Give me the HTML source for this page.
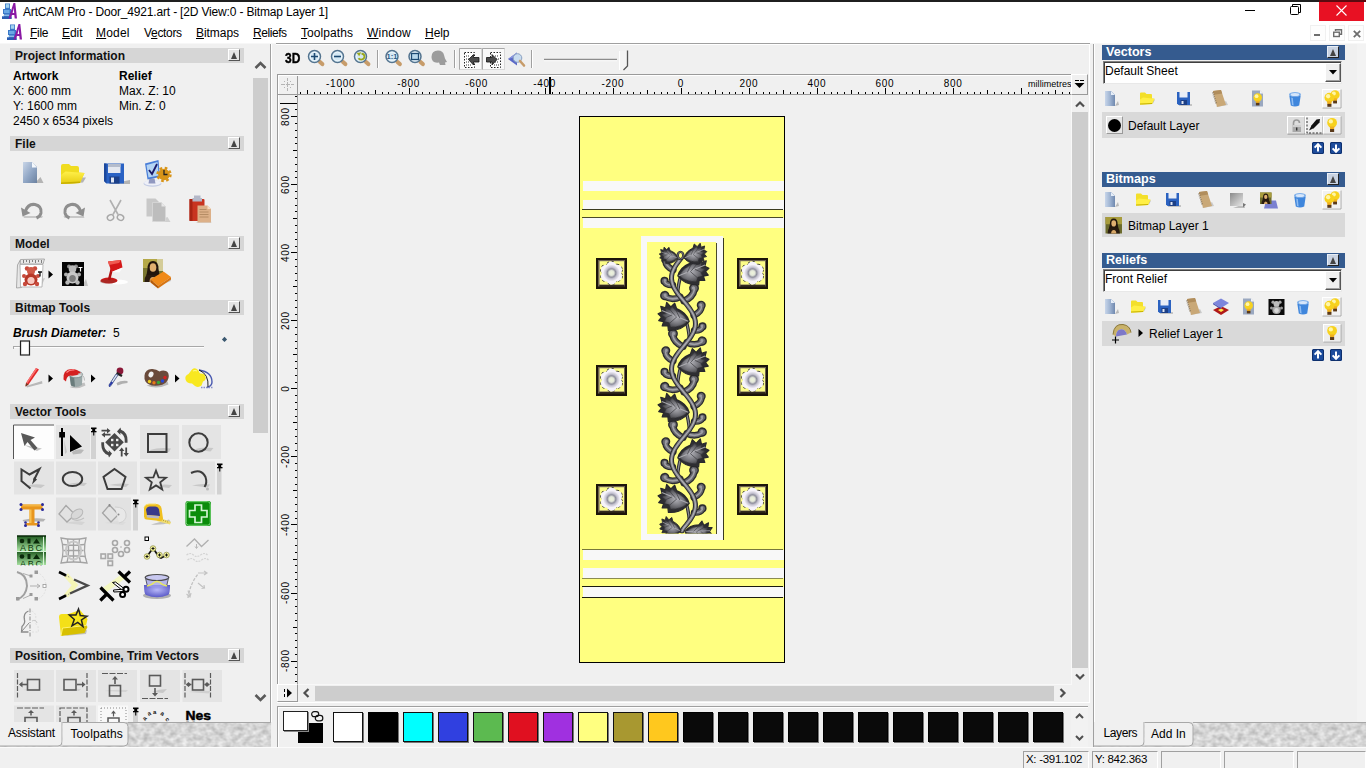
<!DOCTYPE html>
<html lang="en"><head><meta charset="utf-8"><title>ArtCAM Pro - Door_4921.art</title>
<style>
html,body{margin:0;padding:0;}
body{width:1366px;height:768px;overflow:hidden;background:#f0f0f0;position:relative;font-family:"Liberation Sans",sans-serif;font-size:12px;color:#000;}
.a{position:absolute;}
.t{position:absolute;white-space:nowrap;line-height:1;}
svg{position:absolute;overflow:visible;}
#titlebar{left:0;top:0;width:1366px;height:22px;background:#fff;}
#topline{left:0;top:0;width:1366px;height:2px;background:#1f1f1f;}
#menubar{left:0;top:22px;width:1366px;height:21px;background:#fff;}
#menubar .t{font-size:13px;top:5px;}
#menubar u{text-decoration:underline;text-underline-offset:1px;}
.hdr{position:absolute;left:10px;width:234px;height:15px;background:#d6d6d6;}
.hdr b{position:absolute;left:5px;top:2px;font-size:12px;line-height:13px;font-weight:bold;color:#111;white-space:nowrap;}
.cbtn{position:absolute;width:12px;height:12px;background:#e4e4e4;border-right:1px solid #555;border-bottom:1px solid #555;border-left:1px solid #fff;border-top:1px solid #fff;box-sizing:border-box;}
.cbtn i{position:absolute;left:2px;top:2px;width:0;height:0;border-left:3.5px solid transparent;border-right:3.5px solid transparent;border-bottom:7px solid #444;}
.rhdr{position:absolute;left:1102px;width:243px;height:15px;background:#355b8f;}
.rhdr b{position:absolute;left:4px;top:1px;font-size:12.6px;line-height:13px;font-weight:bold;color:#fff;white-space:nowrap;}
.rl{font-size:10px;letter-spacing:0.7px;text-indent:0.7px;}

</style></head>
<body>
<div class="a" id="titlebar"></div><div class="a" id="topline"></div><svg class="a" style="left:2.3px;top:3px" width="15" height="16" viewBox="0 0 15 16">
<path d="M3 .5h5v5.5h1V11H8v2.5h1.5V16H0v-2.5h2V11H1V6h2z" fill="#3a78c8"/>
<path d="M3.8 1.2h3.4v3.6H3.8z" fill="#a4d4f0"/><path d="M2 7h5.5v3H2z" fill="#6aa8e4"/>
<path d="M0 13.5h9.5V16H0z" fill="#2a5cb0"/><path d="M1 12.2h6" stroke="#b8dcf4" stroke-width="1"/>
<path d="M11.5 0h1.8l1.7 15.5h-2.3l-.4-3.5H10l-1.3 3.5H6.5z" fill="#8a1aa4"/>
<path d="M10.6 10h1.6l-.5-5z" fill="#fff"/>
</svg><div class="t" style="left:23px;top:6px;font-size:12px;letter-spacing:-0.17px;color:#000">ArtCAM Pro - Door_4921.art - [2D View:0 - Bitmap Layer 1]</div><div class="a" style="left:1245px;top:10px;width:10px;height:1px;background:#000"></div><svg class="a" style="left:1289px;top:4px" width="12" height="12" viewBox="0 0 12 12"><path d="M3.5 2.5v-2h8v8h-2" fill="none" stroke="#000" stroke-width="1"/><rect x="1.5" y="2.5" width="8" height="8" rx="1" fill="#fff" stroke="#000" stroke-width="1"/></svg><div class="a" style="left:1319px;top:1px;width:45px;height:20px;background:#e81123"></div><div class="a" style="left:1319px;top:0;width:47px;height:2px;background:#5a0a10"></div><svg class="a" style="left:1336px;top:5px" width="11" height="11" viewBox="0 0 11 11"><path d="M0.5 0.5l10 10M10.5 0.5l-10 10" stroke="#fff" stroke-width="1.1" fill="none"/></svg><div class="a" id="menubar"><svg class="a" style="left:7.3px;top:2px" width="15" height="16" viewBox="0 0 15 16">
<path d="M3 .5h5v5.5h1V11H8v2.5h1.5V16H0v-2.5h2V11H1V6h2z" fill="#3a78c8"/>
<path d="M3.8 1.2h3.4v3.6H3.8z" fill="#a4d4f0"/><path d="M2 7h5.5v3H2z" fill="#6aa8e4"/>
<path d="M0 13.5h9.5V16H0z" fill="#2a5cb0"/><path d="M1 12.2h6" stroke="#b8dcf4" stroke-width="1"/>
<path d="M11.5 0h1.8l1.7 15.5h-2.3l-.4-3.5H10l-1.3 3.5H6.5z" fill="#8a1aa4"/>
<path d="M10.6 10h1.6l-.5-5z" fill="#fff"/>
</svg><div class="t" style="left:30px;top:5px;font-size:12px;letter-spacing:-0.29px"><u>F</u>ile</div><div class="t" style="left:62px;top:5px;font-size:12px;letter-spacing:-0.05px"><u>E</u>dit</div><div class="t" style="left:96px;top:5px;font-size:12px;letter-spacing:0.18px"><u>M</u>odel</div><div class="t" style="left:144px;top:5px;font-size:12px;letter-spacing:-0.32px">V<u>e</u>ctors</div><div class="t" style="left:196px;top:5px;font-size:12px;letter-spacing:-0.05px"><u>B</u>itmaps</div><div class="t" style="left:253px;top:5px;font-size:12px;letter-spacing:-0.44px"><u>R</u>eliefs</div><div class="t" style="left:301px;top:5px;font-size:12px;letter-spacing:0.07px"><u>T</u>oolpaths</div><div class="t" style="left:367px;top:5px;font-size:12px;letter-spacing:0.22px"><u>W</u>indow</div><div class="t" style="left:425px;top:5px;font-size:12px;letter-spacing:-0.05px"><u>H</u>elp</div><div class="a" style="left:1310px;top:3px;width:16px;height:16px;border:1px solid #f0f0f0;box-sizing:border-box;background:#fdfdfd"></div><div class="a" style="left:1329px;top:3px;width:16px;height:16px;border:1px solid #f0f0f0;box-sizing:border-box;background:#fdfdfd"></div><div class="a" style="left:1348px;top:3px;width:16px;height:16px;border:1px solid #f0f0f0;box-sizing:border-box;background:#fdfdfd"></div><div class="a" style="left:1314px;top:12px;width:6px;height:2px;background:#6d6d6d"></div><svg class="a" style="left:1333px;top:7px" width="9" height="9" viewBox="0 0 9 9"><path d="M2.5 2V.8h6v4.5H7" fill="none" stroke="#6d6d6d" stroke-width="1.4"/><rect x=".7" y="3.2" width="5.6" height="4.3" fill="#fff" stroke="#6d6d6d" stroke-width="1.4"/></svg><svg class="a" style="left:1353px;top:8px" width="8" height="8" viewBox="0 0 8 8"><path d="M.8 .8l6.4 6.4M7.2 .8L.8 7.2" stroke="#6d6d6d" stroke-width="1.8" fill="none"/></svg></div><div class="a" style="left:0;top:43px;width:1366px;height:1px;background:#f7f7f7"></div><div class="a" id="leftpanel" style="left:0;top:44px;width:270px;height:678px;background:#f0f0f0;overflow:hidden"><div class="hdr" style="top:4px"><b>Project Information</b><span class="cbtn" style="left:218px;top:1px"><i></i></span></div><div class="t" style="left:13px;top:25.5px;font-weight:bold;">Artwork</div><div class="t" style="left:119px;top:25.5px;font-weight:bold;">Relief</div><div class="t" style="left:13px;top:40.5px;">X: 600 mm</div><div class="t" style="left:119px;top:40.5px;">Max. Z: 10</div><div class="t" style="left:13px;top:55.5px;">Y: 1600 mm</div><div class="t" style="left:119px;top:55.5px;">Min. Z: 0</div><div class="t" style="left:13px;top:70.5px;">2450 x 6534 pixels</div><div class="hdr" style="top:92px"><b>File</b><span class="cbtn" style="left:218px;top:1px"><i></i></span></div><div class="hdr" style="top:192px"><b>Model</b><span class="cbtn" style="left:218px;top:1px"><i></i></span></div><div class="hdr" style="top:256px"><b>Bitmap Tools</b><span class="cbtn" style="left:218px;top:1px"><i></i></span></div><div class="t" style="left:13px;top:283px;"><b><i>Brush Diameter:</i></b>&nbsp; 5</div><div class="hdr" style="top:360px"><b>Vector Tools</b><span class="cbtn" style="left:218px;top:1px"><i></i></span></div><div class="hdr" style="top:604px"><b>Position, Combine, Trim Vectors</b><span class="cbtn" style="left:218px;top:1px"><i></i></span></div><svg class="a" style="left:0;top:-44px" width="270" height="768" viewBox="0 0 270 768"><defs><linearGradient id="gdoc" x1="0" y1="0" x2="1" y2="1"><stop offset="0" stop-color="#c9d6e8"/><stop offset=".55" stop-color="#8fa5c4"/><stop offset="1" stop-color="#6b819f"/></linearGradient><linearGradient id="gfold" x1="0" y1="0" x2="0" y2="1"><stop offset="0" stop-color="#fff04a"/><stop offset="1" stop-color="#e6cc10"/></linearGradient><linearGradient id="gabc" x1="0" y1="0" x2="0" y2="1"><stop offset="0" stop-color="#1f5a1f"/><stop offset=".5" stop-color="#a6e0a0"/><stop offset=".52" stop-color="#1f5a1f"/><stop offset="1" stop-color="#a6e0a0"/></linearGradient><radialGradient id="gbowl" cx=".5" cy=".4" r=".6"><stop offset="0" stop-color="#b8b8f8"/><stop offset="1" stop-color="#5a5ac8"/></radialGradient><filter id="sh" x="-20%" y="-20%" width="140%" height="140%"><feGaussianBlur stdDeviation="0.7"/></filter></defs><g transform="translate(23 162)"><path d="M12 21h8.5l-3-6z" fill="#b4b4b4" filter="url(#sh)"/><path d="M0 0h9l5 5v16H0z" fill="url(#gdoc)"/><path d="M9 0l5 5.5H9z" fill="#f4f8fc"/></g><g transform="translate(60 163)"><path d="M4 21l19-1.5 3-5-6 0z" fill="#b4b4b4" filter="url(#sh)"/><path d="M1 3q0-2 2-2h6l2 2h6q2 0 2 2v4.5l5.5.5L20 20 1 21z" fill="#f0dc20"/><path d="M1 12l4.5-3.5L24.5 10 20 20 1 21z" fill="url(#gfold)"/><path d="M1 19.5L20 18.5 20 20 1 21z" fill="#c8b000"/></g><g transform="translate(104 163.5)"><path d="M5 20.5h21v-4z" fill="#b4b4b4" filter="url(#sh)"/><path d="M0 0h20v20H2.5L0 17.5z" fill="#2a62c4"/><path d="M0 0h2.5v20H2.5L0 17.5z" fill="#1c489c"/><rect x="4" y="0.5" width="12.5" height="9" fill="#e4e8f0"/><rect x="4" y="0.5" width="12.5" height="3" fill="#b4bccc"/><rect x="5.5" y="13" width="10" height="7" fill="#1b3f88"/><rect x="7" y="14" width="3" height="5" fill="#dfe6f3"/></g><g transform="translate(143.5 160)"><ellipse cx="9" cy="23.5" rx="9" ry="3.2" fill="#c4cce4"/><ellipse cx="9" cy="22.8" rx="8.5" ry="2.6" fill="#eef0f8"/><path d="M6 18l5 .5 1 5H5z" fill="#9098c0"/><path d="M1.5 3.5L15 0l1.5 17L4 19.5z" fill="#4a7ed8"/><path d="M3 5L14 2l1.2 13.5L5 17.5z" fill="#b4d4f4"/><path d="M5.5 10l3 4 5-10" fill="none" stroke="#1a1a6a" stroke-width="1.8"/><circle cx="20.5" cy="14.5" r="5.8" fill="#d89418"/><circle cx="20.5" cy="14.5" r="6.5" fill="none" stroke="#d89418" stroke-width="2.4" stroke-dasharray="2.6 2.5"/><path d="M20.5 10v4.5h3.5" stroke="#222" stroke-width="1.3" fill="none"/></g><g transform="translate(21 203)"><path d="M2 13h20l-1 2H3z" fill="#c8c8c8"/><path d="M4.5 8Q7 0.5 14 1.5q7 1.5 6 8.5-.8 3.5-4.5 5" fill="none" stroke="#8e8e8e" stroke-width="3"/><path d="M0 4.5l1.5 9 8-3.5z" fill="#8e8e8e"/></g><g transform="translate(62.5 203)"><path d="M1 13h20l1 2H2z" fill="#c8c8c8"/><path d="M18 8Q15.5 0.5 8.5 1.5 1.5 3 2.5 10q.8 3.5 4.5 5" fill="none" stroke="#8e8e8e" stroke-width="3"/><path d="M22.5 4.5l-1.5 9-8-3.5z" fill="#8e8e8e"/></g><g transform="translate(106 199.5)"><path d="M4 0.5L12 15M15 0.5L7 15" stroke="#b0b0b0" stroke-width="1.6" fill="none"/><ellipse cx="4.5" cy="18" rx="3.3" ry="2.8" fill="none" stroke="#a8a8a8" stroke-width="1.4" transform="rotate(-30 4.5 18)"/><ellipse cx="14.5" cy="18" rx="3.3" ry="2.8" fill="none" stroke="#a8a8a8" stroke-width="1.4" transform="rotate(30 14.5 18)"/></g><g transform="translate(146.5 198.5)"><path d="M8 23.5h16l-3-5z" fill="#d0d0d0" filter="url(#sh)"/><path d="M0 0h9l3 3v15H0z" fill="#c8c8c8"/><path d="M6 4h9l4 4v15H6z" fill="#bdbdbd" stroke="#d8d8d8" stroke-width=".8"/><path d="M15 4l4 4h-4z" fill="#e8e8e8"/></g><g transform="translate(189.5 195.5)"><path d="M6 27h16l-2-4z" fill="#c0c0c0" filter="url(#sh)"/><rect x="0" y="3.5" width="15" height="22" rx="1" fill="#c83420"/><rect x="0" y="3.5" width="3" height="22" fill="#a82414"/><path d="M4.5 0h6.5v2.5h1.5v3.5h-9.5V2.5h1.5z" fill="#b4b8c8"/><path d="M8 10h10l3.5 3.5V27H8z" fill="#dcb088"/><path d="M18 10l3.5 3.5H18z" fill="#f4dcc0"/><path d="M10 14h7M10 16.5h9M10 19h9M10 21.5h9" stroke="#b08860" stroke-width=".9"/></g><g transform="translate(15.5 259)"><path d="M26 27l3.5-8-4 1z" fill="#c8c8c8"/><path d="M5 0.5L29 0l-1.5 5H4z" fill="#e8e8e8" stroke="#999" stroke-width=".8"/><path d="M2 6L4.5 1.5 6 28.5l-5 .5z" fill="#e8e8e8" stroke="#999" stroke-width=".8"/><path d="M4.5 5.5h23L26.5 28H5z" fill="#fff" stroke="#aaa" stroke-width=".8"/><path d="M8 1v3M11 1v2M14 1v3M17 1v2M20 1v3M23 1v2M26 1v3" stroke="#666" stroke-width=".8"/><circle cx="11.5" cy="9.5" r="2.2" fill="#c84a3c"/><circle cx="19.5" cy="9.5" r="2.2" fill="#c84a3c"/><circle cx="15.5" cy="12" r="4" fill="#d05a48"/><ellipse cx="15.5" cy="20.5" rx="6.5" ry="6" fill="#b83828"/><ellipse cx="15.5" cy="21.5" rx="3.6" ry="3.6" fill="#f8c8c0"/><circle cx="9.5" cy="25" r="2.2" fill="#c84a3c"/><circle cx="21.5" cy="25" r="2.2" fill="#c84a3c"/><circle cx="8.5" cy="17" r="2" fill="#c84a3c"/><circle cx="22.5" cy="17" r="2" fill="#c84a3c"/><path d="M22.5 13h4M24.5 13v4.5" stroke="#111" stroke-width="1.3"/></g><path d="M48.5 270.5v8l4.5-4z" fill="#000"/><g transform="translate(62 262)"><path d="M20 24h6l-2-7z" fill="#c4c4c4"/><rect width="22" height="24" fill="#050505"/><circle cx="7" cy="4.5" r="2" fill="#909090"/><circle cx="14" cy="4.5" r="2" fill="#909090"/><circle cx="10.5" cy="7" r="3.8" fill="#b8b8b8"/><ellipse cx="10.5" cy="15.5" rx="6" ry="6" fill="#c8c8c8"/><ellipse cx="10.5" cy="16.5" rx="3.3" ry="3.5" fill="#7c7c7c"/><circle cx="4" cy="12.5" r="2" fill="#b0b0b0"/><circle cx="17" cy="12.5" r="2" fill="#b0b0b0"/><circle cx="5.5" cy="20.5" r="2.2" fill="#b8b8b8"/><circle cx="15.5" cy="20.5" r="2.2" fill="#b8b8b8"/><path d="M16.5 5.5h4M18.5 5.5v4" stroke="#fff" stroke-width="1.2"/></g><g transform="translate(100 260)"><ellipse cx="17" cy="22" rx="11" ry="2.5" fill="#fff" opacity=".9"/><ellipse cx="9" cy="20.5" rx="8.5" ry="3" fill="#c81818"/><ellipse cx="8" cy="21.5" rx="8" ry="2" fill="#8a3a30" opacity=".45"/><path d="M9 20L12 8" stroke="#b01010" stroke-width="2.6"/><path d="M8 1.5l13-1.5 1.5 7.5-11 4.5z" fill="#d41818"/><path d="M8 1.5L21 0l-2 3-10 2z" fill="#f05a50"/><path d="M22.5 7.5l-3 5-8-0.5z" fill="#fff" opacity=".8"/></g><g transform="translate(143 259)"><path d="M10 29l18-7 0-3z" fill="#c8c8c8" filter="url(#sh)"/><rect x="0" y="0" width="20" height="23" fill="#7a7630"/><rect x="0" y="0" width="20" height="9" fill="#b4a848"/><rect x="14" y="0" width="6" height="12" fill="#d4cc98"/><path d="M1.5 23q0-10 8.5-10t8.5 10z" fill="#2a1c10"/><path d="M4.5 10q0-8 5.5-8t5.5 8l1 6H3.5z" fill="#22160c"/><ellipse cx="10" cy="8.5" rx="3.3" ry="4.3" fill="#e0b070"/><path d="M6.5 23q0-5 3.5-5t3.5 5z" fill="#d8a868"/><path d="M7.5 20.5L20.5 12.5l7.5 5.5-13 9z" fill="#f08a18"/><path d="M7.5 20.5l7.5 6.5v2.5l-7.5-6z" fill="#b45a08"/><path d="M15 27l13-9v2.5l-13 9z" fill="#d87410"/></g><path d="M13 346.5H204" stroke="#a8a8a8" stroke-width="1"/><path d="M13 347.5H204" stroke="#fdfdfd" stroke-width="1"/><path d="M13.5 346v3" stroke="#a8a8a8"/><rect x="20.5" y="341" width="9" height="14" fill="#f4f4f4" stroke="#222" stroke-width="1.2"/><rect x="22" y="342.5" width="6" height="11" fill="#fff"/><path d="M224.5 336.8l2.6 2.6-2.6 2.6-2.6-2.6z" fill="#3a5870"/><g transform="translate(24 368)"><path d="M2 18l16-5 .5 2.5L3 19.5z" fill="#b8b8b8" filter="url(#sh)"/><path d="M12 0l3 1.5L4.5 16.5 1.5 18.5 2 15z" fill="#e02828"/><path d="M12 0l1.5.8L3 16 2 15z" fill="#f87070"/><path d="M1.5 18.5L2 15l2.5 1.5z" fill="#6a3a20"/></g><path d="M48.5 374.5v8l4.5-4z" fill="#000"/><g transform="translate(63.5 367.5)"><path d="M6 19.5q8 3 16-1.5l-1-3z" fill="#c0c0c0" filter="url(#sh)"/><path d="M6 8l1.5 10q5.5 3 11-0.5L19 6.5z" fill="#9aa8a8"/><path d="M6 8l1.5 10q2 1 4 1.2L10.5 8z" fill="#6a7c7c"/><ellipse cx="12.5" cy="7" rx="6.6" ry="3.3" fill="#d8e0e0" stroke="#788" stroke-width=".8"/><path d="M0 12Q-1 2 8 1.5q6 0 9.5 4-5 3.5-10.5 2.5Q3 8.5 2.5 14z" fill="#d42020"/><path d="M3 5q3-3 8-2.5" stroke="#f88" stroke-width="1.2" fill="none"/><path d="M15 6q6 1 6 7" fill="none" stroke="#bbb" stroke-width="1"/></g><path d="M91 374.5v8l4.5-4z" fill="#000"/><g transform="translate(107.5 367.5)"><path d="M9 15.5q5-3 11-2l0 2q-5 0-10 2.5z" fill="#b0b0b0" filter="url(#sh)"/><circle cx="12.5" cy="3.5" r="3.4" fill="#8a1838"/><path d="M9 5.5l5.5 3" stroke="#222" stroke-width="2.4"/><path d="M10.5 7.5L3.5 18 2 19.5 1.5 17.5 8.5 6.5z" fill="#dce4f4" stroke="#4a5a8a" stroke-width=".9"/><path d="M5.5 15L2 19.5 1.5 17.5 4 14z" fill="#2838a8"/></g><g transform="translate(143.5 368.5)"><path d="M3 17q10 4.5 22-1l-1-3z" fill="#b8b8b8" filter="url(#sh)"/><path d="M1 7Q2 0 9 .5q4 .3 7 2.5 3-1.5 6.5-.5Q26 4 25 9.5 23.5 16 15 17 5 18 2 13 .5 10.5 1 7z" fill="#6a4a3a"/><ellipse cx="7.5" cy="6" rx="2.4" ry="3" fill="#f0f0f0" transform="rotate(25 7.5 6)"/><circle cx="6" cy="13" r="1.7" fill="#f0d020"/><circle cx="10.5" cy="14.2" r="1.7" fill="#e87818"/><circle cx="15" cy="14" r="1.7" fill="#38a838"/><circle cx="19" cy="12.5" r="1.7" fill="#2848d8"/><circle cx="21.5" cy="9" r="1.7" fill="#d82020"/></g><path d="M175 374.5v8l4.5-4z" fill="#000"/><g transform="translate(185 368)"><path d="M14 2Q27 4 27 14q0 4-5 5.5" fill="none" stroke="#4a5ab0" stroke-width="1.4"/><path d="M14 2q10 4 9 17" fill="none" stroke="#222" stroke-width="1"/><path d="M16 19.5h12" stroke="#8a90c8" stroke-width="1.5" stroke-dasharray="1.5 1"/><path d="M7 1.5q3-2.5 6 .5l2 3.5q4.5-.5 5.5 3t-2.5 5l-1.5 4q-3 2.5-6.5.5l-3-2.5Q1.5 15.5.5 11.5t3-5.5z" fill="#f8e820"/><path d="M8 3q2-1 4 0" stroke="#fff890" stroke-width="1.2" fill="none"/></g><rect x="13" y="424.5" width="41" height="34.5" fill="#fdfdfd"/><path d="M13.5 459V425H54" fill="none" stroke="#555" stroke-width="1"/><rect x="56" y="425" width="34" height="34" fill="#e4e4e4"/><rect x="91" y="432" width="5" height="27" fill="#d2d2d2"/><g transform="translate(91 425.5)" fill="#000"><rect x="0" y="2" width="5.5" height="1.6"/><rect x="1.2" y="3.5" width="3" height="2.2"/><rect x="0" y="5.5" width="5.5" height="1.3"/><rect x="2.2" y="6.5" width="1.1" height="3.5"/></g><rect x="140" y="425" width="39" height="34" fill="#e4e4e4"/><rect x="182" y="425" width="39" height="34" fill="#e4e4e4"/><rect x="14" y="461.5" width="40" height="33" fill="#e4e4e4"/><rect x="56" y="461.5" width="40" height="33" fill="#e4e4e4"/><rect x="98" y="461.5" width="39" height="33" fill="#e4e4e4"/><rect x="140" y="461.5" width="39" height="33" fill="#e4e4e4"/><rect x="182" y="461.5" width="33" height="33" fill="#e4e4e4"/><rect x="217" y="468" width="4.5" height="26.5" fill="#d2d2d2"/><g transform="translate(217 461.5)" fill="#000"><rect x="0" y="2" width="5.5" height="1.6"/><rect x="1.2" y="3.5" width="3" height="2.2"/><rect x="0" y="5.5" width="5.5" height="1.3"/><rect x="2.2" y="6.5" width="1.1" height="3.5"/></g><rect x="56" y="497.5" width="40" height="33" fill="#e2e2e2"/><rect x="98" y="497.5" width="33" height="33" fill="#e2e2e2"/><rect x="133" y="504" width="5" height="26.5" fill="#d2d2d2"/><g transform="translate(133 497.5)" fill="#000"><rect x="0" y="2" width="5.5" height="1.6"/><rect x="1.2" y="3.5" width="3" height="2.2"/><rect x="0" y="5.5" width="5.5" height="1.3"/><rect x="2.2" y="6.5" width="1.1" height="3.5"/></g><g transform="translate(20 431)"><path d="M4 14l18 3.5-5 2.5z" fill="#c4c4c4" filter="url(#sh)"/><path d="M1 2l14 4.5-4.5 2.5 7 8-3 2.5-7-8.5-3 4z" fill="#585858"/></g><path d="M72 452q5-4 12-2l-3 3.5-8 1z" fill="#b8b8b8" filter="url(#sh)"/><path d="M64 440l3 12-2 2z" fill="#c8c8c8" filter="url(#sh)"/><path d="M62 428v28" stroke="#000" stroke-width="2"/><rect x="59.2" y="432" width="5.8" height="5.5" fill="#000"/><path d="M70 435v17l12-5.5z" fill="#000"/><g fill="#484848" stroke="none"><path d="M114.5 433l9.3 9.3-9.3 9.3-9.3-9.3z"/><g fill="#ececec"><rect x="111" y="438.8" width="2.4" height="2.4"/><rect x="116" y="438.8" width="2.4" height="2.4"/><rect x="111" y="443.8" width="2.4" height="2.4"/><rect x="116" y="443.8" width="2.4" height="2.4"/></g><path d="M117 431.5l3.5-4 .5 2.3q6.5 2.5 6.5 10.5v2.5h-2.8v-2.5q0-5.5-4.5-7.5l.3 2.2z"/><path d="M112 453.5l-3 4-.7-2.3q-7-2.5-7-10.5v-2.5h2.8v2.5q0 5.5 5 7.5l-.5-2.2z"/><path d="M101.5 429.8h5.5v-1.8l3.5 2.7-3.5 2.7v-1.8h-5.5zM110.5 433.8h-5.5v-1.8l-3.5 2.7 3.5 2.7v-1.8h5.5z"/><path d="M120.8 456.5v-5.5h-1.8l2.7-3.5 2.7 3.5h-1.8v5.5zM125.3 447.5v5.5h-1.8l2.7 3.5 2.7-3.5h-1.8v-5.5z"/></g><g transform="translate(147 433)"><path d="M3 17q9-3 21-1.5l-2 3.5H4z" fill="#c8c8c8" filter="url(#sh)"/><rect x="1" y="1" width="18.5" height="18" fill="none" stroke="#3c3c3c" stroke-width="2"/></g><g transform="translate(188.5 432.5)"><path d="M5 17q9-3 20-1.5l-3 3.5z" fill="#c8c8c8" filter="url(#sh)"/><circle cx="10" cy="10" r="9.2" fill="none" stroke="#3c3c3c" stroke-width="2"/></g><g transform="translate(20 467)"><path d="M5 19q10-3 20-1l-4 3z" fill="#c8c8c8" filter="url(#sh)"/><path d="M10.5 21.5L1.5 14V2.5l8 5L19.5 2 14 13" fill="none" stroke="#3c3c3c" stroke-width="2"/><path d="M12 17.5l2-7.5 3 2.5z" fill="#3c3c3c"/></g><g transform="translate(62 471)"><path d="M6 13q9-2.5 19-1l-3 3z" fill="#c8c8c8" filter="url(#sh)"/><ellipse cx="10.5" cy="8" rx="9.7" ry="7" fill="none" stroke="#3c3c3c" stroke-width="2"/></g><g transform="translate(102 468)"><path d="M7 17q9-2.5 20-1l-3 3z" fill="#c8c8c8" filter="url(#sh)"/><path d="M12.5 1L23.5 9 19.5 21H5.5L1.5 9z" fill="none" stroke="#3c3c3c" stroke-width="2"/></g><g transform="translate(145 469)"><path d="M8 17q9-2.5 19-1l-3 3z" fill="#c8c8c8" filter="url(#sh)"/><path d="M11 1.5l2.6 6.8 7.4.4-5.8 4.6 2 7.2L11 16.4 4.8 20.5l2-7.2L1 8.7l7.4-.4z" fill="none" stroke="#3c3c3c" stroke-width="1.8"/></g><g transform="translate(188 470)"><path d="M4 15.5q9-2.5 18-1l-2 3z" fill="#c8c8c8" filter="url(#sh)"/><path d="M3 3Q13-2 17.5 7q2 6-1 10" fill="none" stroke="#3c3c3c" stroke-width="2"/><circle cx="19.5" cy="19" r="1.5" fill="#bbb"/></g><g transform="translate(19.5 503)"><path d="M3 17q12-3 23-1l-2 2.5H4z" fill="#b4b4b4" filter="url(#sh)"/><path d="M1.5 1.5h21.5v5h-8v13.5h4v2.5H6v-2.5h4V6.5h-8.5z" fill="#e8961e"/><path d="M10 6.5h2v13.5h-2z" fill="#f8c050"/><path d="M1.5 1.5h21.5v2H1.5z" fill="#f4b440"/><g fill="#2a2a9a"><circle cx="1.5" cy="1.5" r="1.5"/><circle cx="23" cy="1.5" r="1.5"/><circle cx="1.5" cy="6.5" r="1.5"/><circle cx="23" cy="6.5" r="1.5"/><circle cx="6" cy="22.5" r="1.5"/><circle cx="19" cy="22.5" r="1.5"/><circle cx="6" cy="19.5" r="1.3"/><circle cx="19" cy="19.5" r="1.3"/></g></g><g transform="translate(58 503)"><path d="M7 20q10-3 20-1l-3 3z" fill="#d4d4d4" filter="url(#sh)"/><path d="M8 2.5l9 9-8 7.5-8-8z" fill="none" stroke="#a8a8a8" stroke-width="1.3"/><ellipse cx="19" cy="11" rx="6.5" ry="4" fill="#d8d8d8" stroke="#b8b8b8" stroke-width="1" transform="rotate(-35 19 11)"/><path d="M14 16q6 3 12-1" stroke="#c0c0c0" stroke-width="1.2" fill="none"/></g><g transform="translate(101 503)"><path d="M3 20q10-3 22-1l-3 3z" fill="#dcdcdc" filter="url(#sh)"/><path d="M8.5 2l9 9.5-7.5 7.5-8.5-9z" fill="none" stroke="#a4a4a4" stroke-width="1.3"/><path d="M14 4q10 0 11 7t-7 9" fill="#e8e8e8" stroke="#d0d0d0" stroke-width="1"/><circle cx="8.5" cy="2" r="1" fill="#888"/><circle cx="17.5" cy="11.5" r="1" fill="#888"/></g><g transform="translate(143 503.5)"><path d="M8 21q10 1 20-2l-2-3z" fill="#c0c0c0" filter="url(#sh)"/><path d="M16 14l12 4.5-1 2.5-13-3.5z" fill="#f0dc70"/><path d="M18 16l8 3" stroke="#a08820" stroke-width=".8" stroke-dasharray="1 1.2"/><path d="M1 4Q2 .5 6 .5h7q4 0 5.5 4L20 15q0 2-3 2.5L3.5 16Q1 15.5 1 13z" fill="#f0c020"/><path d="M3 6q1-3 4-3h5q3 0 4 3l1 6.5-13-1z" fill="#3a3a8a"/><path d="M3.5 11.5l12.5 1-.3 2.5L4 14z" fill="#b8b8c8"/><path d="M1 4Q2 .5 6 .5h7" stroke="#f8e070" stroke-width="1" fill="none"/></g><g transform="translate(185.5 501)"><rect x="0" y="0" width="25.5" height="25" rx="2.5" fill="#0a8c0a"/><rect x=".7" y=".7" width="24" height="23.5" rx="2.5" fill="none" stroke="#7cd87c" stroke-width="1"/><path d="M9.5 4h6.5v5.5h5.5V16H16v5.5H9.5V16H4V9.5h5.5z" fill="#0a8c0a" stroke="#d4f4d4" stroke-width="1.7"/></g><g transform="translate(17 536)"><rect width="29" height="29" fill="url(#gabc)"/><g fill="#0a2a0a"><circle cx="5" cy="5" r="2.3"/><rect x="10.5" y="2.5" width="3" height="5"/><path d="M16 7.5l3.5-5 3.5 5z"/><circle cx="5" cy="20.5" r="2.3"/><rect x="10.5" y="18" width="3" height="5"/><path d="M16 23l3.5-5 3.5 5z"/></g><path d="M26.5 0v29M0 15.5h29" stroke="#d8f4d8" stroke-width="1"/><path d="M0 0h29" stroke="#0a2a0a" stroke-width="1.5"/><text x="3" y="14.8" font-family="Liberation Sans,sans-serif" font-size="9" fill="#103810" textLength="22">ABC</text><text x="3" y="30.5" font-family="Liberation Sans,sans-serif" font-size="9" fill="#103810" textLength="22" clip-path="inset(0 0 3px 0)">ABC</text></g><g transform="translate(60 536.5)"><g fill="none" stroke="#a4a4a4" stroke-width="1.3"><path d="M1 1.5Q13.5 4 26 1.5Q22.5 14 27 26.5Q13.5 24.5 1 26.5Q5 14 1 1.5z"/><path d="M7.5 2.5Q10 14 7 26M13.5 3v22.5M19.5 2.5Q17.5 14 20.5 26M3 8q10.5 1.5 21.5 0M3.5 14h20M3 20q10.5-1.5 22.5 0"/></g><ellipse cx="13.5" cy="14" rx="7.5" ry="9" fill="none" stroke="#c8c8c8" stroke-width="2.2"/></g><g transform="translate(100 539)"><g fill="none" stroke="#a8a8a8" stroke-width="1.6"><rect x="1" y="15" width="4.5" height="4.5"/><rect x="8" y="15" width="4.5" height="4.5"/><rect x="8" y="22" width="4.5" height="4.5"/><circle cx="15" cy="4" r="2.5"/><circle cx="27" cy="4" r="2.5"/><circle cx="15" cy="11" r="2.5"/><circle cx="27" cy="11" r="2.5"/><circle cx="21" cy="15" r="2.5"/></g><circle cx="21" cy="8" r=".8" fill="#a8a8a8"/></g><g transform="translate(143.5 536)"><rect x="1.5" y="1" width="3.5" height="3.5" fill="#fff" stroke="#000" stroke-width="1"/><path d="M3.5 20.5L9.5 12l6 9 2 1 5-2.5" fill="none" stroke="#111" stroke-width="1.8"/><g fill="#f4f4a0" stroke="#8a8a40" stroke-width=".7"><circle cx="3.5" cy="20.5" r="2.8"/><circle cx="9.5" cy="12.5" r="2.8"/><circle cx="16" cy="19" r="2.8"/><circle cx="23" cy="19" r="2.8"/></g><g stroke="#111" stroke-width="1"><path d="M2 20.5h3M3.5 19v3M8 12.5h3M9.5 11v3M14.5 19h3M16 17.5v3M21.5 19h3M23 17.5v3"/></g></g><g transform="translate(185.5 538)"><path d="M1 8.5L9 1l7 7.5L23 2" fill="none" stroke="#b0b0b0" stroke-width="1.3"/><path d="M11 6v4M9.5 8.5L11 10.5 12.5 8.5" fill="none" stroke="#b8b8b8" stroke-width="1"/><path d="M1 17q4-3 7 0t7 0 7 0M2 22q4-3 7 0t7 0 7 0" fill="none" stroke="#d4d4d4" stroke-width="1.2" stroke-dasharray="2 1"/></g><g transform="translate(16 570.5)"><path d="M1 1.5Q11 4 11 15.5 10 26 1 29" fill="none" stroke="#a0a0a0" stroke-width="2"/><path d="M20.5 1.5Q30 6 30 15.5T21 29" fill="none" stroke="#e0e0e0" stroke-width="1" stroke-dasharray="2 1.5"/><path d="M7 3l8 2.5M7 28l8-3.5M14 15.5h10M21 13.5l3 2-3 2" fill="none" stroke="#b0b0b0" stroke-width="1"/><g fill="#9a9a9a"><rect x="0" y="26.5" width="3.5" height="3.5"/><rect x="13.5" y="4" width="3" height="3"/><rect x="13.5" y="22.5" width="3" height="3"/><rect x="18.5" y="0" width="3.5" height="3.5"/><rect x="18.5" y="26.5" width="3.5" height="3.5"/></g><rect x="27" y="14" width="3" height="3" fill="#fff" stroke="#999" stroke-width=".8"/></g><g transform="translate(58 571)"><path d="M8 4l9 10-9 11" fill="none" stroke="#f8f8a8" stroke-width="5" opacity=".8"/><path d="M1 1l7 3.5" stroke="#000" stroke-width="2.6"/><path d="M1 28l7-3.5" stroke="#000" stroke-width="2.6"/><path d="M8 4.5l4 2M8 24.5l4-2" stroke="#888" stroke-width="1" stroke-dasharray="1.2 1.2"/><path d="M16 8.5L29.5 14.5 12 22.5" fill="none" stroke="#4a4a4a" stroke-width="2.4"/></g><path d="M104 590.5L124.5 575.5" stroke="#f4f8c0" stroke-width="5.5"/><path d="M100.5 587.5l13 13M106.8 594l-6.5 6.5" stroke="#000" stroke-width="3.2" fill="none"/><path d="M118.5 571.5l11.5 11M124.2 577l5.8-5.5" stroke="#000" stroke-width="3.2" fill="none"/><path d="M112.5 582.5l3-.5 8.5 6.5-2 1.5z" fill="#fff" stroke="#000" stroke-width="1"/><path d="M113.5 590l9.5-.8.3 2.3-9.5.5z" fill="#fff" stroke="#000" stroke-width="1"/><circle cx="126" cy="589.2" r="2.5" fill="#fff" stroke="#000" stroke-width="2"/><circle cx="122.6" cy="594.6" r="2.5" fill="#fff" stroke="#000" stroke-width="2"/><g transform="translate(143 574)"><ellipse cx="14" cy="21.5" rx="14" ry="3.5" fill="#b0b0b0" filter="url(#sh)"/><path d="M1 11q0 9 2 10 11 4.5 22 0 2-1 2-10z" fill="url(#gbowl)"/><path d="M2.5 3L4 12q10 4 20 0l1.5-9" fill="#9a9ae8" opacity=".7"/><ellipse cx="14" cy="3.5" rx="11.8" ry="3" fill="#c8c8f0" stroke="#4a4a4a" stroke-width="1.2"/><path d="M2.5 4L4.5 12.5M25.5 4l-2 8.5" stroke="#5a5a6a" stroke-width="1"/><path d="M4 12q5-1 7-3.5 3-2 6 0 2 2.5 7 3.5" fill="none" stroke="#e8e860" stroke-width="1.3"/></g><g transform="translate(185 571)"><path d="M3 27Q5 13 13 3" fill="none" stroke="#c0c0c0" stroke-width="1.3" stroke-dasharray="3 1.5"/><path d="M13 2h9M19 0l3 2-3 2M13 12l6 5M16.5 17.5l3-.5-.5-3M3 19.5l2 6M1.5 23l3.5 3 1-4" fill="none" stroke="#c4c4c4" stroke-width="1.2"/></g><g transform="translate(20 608)"><path d="M10 .5v28" stroke="#8a8a8a" stroke-width="1" stroke-dasharray="4 1.5 1 1.5"/><path d="M8.5 3Q3 5 4.5 12 5.5 15 2 18.5L1.5 24h7" fill="none" stroke="#8a8a8a" stroke-width="1.3"/><path d="M2 23l7-8" stroke="#8a8a8a" stroke-width="1"/><path d="M11.5 3Q17 5 15.5 12q-1 3 2.5 6.5l.5 5.5h-7" fill="none" stroke="#e0e0e0" stroke-width="1" stroke-dasharray="2 1.5"/><path d="M12 13q4-2 5 2" fill="none" stroke="#c8c8c8" stroke-width="1"/></g><g transform="translate(58 608)"><path d="M6 28l22-2 1-4z" fill="#c0c0c0" filter="url(#sh)"/><path d="M1 9q0-3 3-3h6.5L22 2l7.5 9-1.5 7-8 2.5L3 28z" fill="#f4e018"/><path d="M3 28l1.5-8L28 17l1.5 2-3 6z" fill="#d8c000"/><path d="M3 28l1.5-8L28 17.5" fill="none" stroke="#fff470" stroke-width="1"/><path d="M20.5 1l1.8 6.5 6.7.7-5.6 3.8 1.6 6.5-5.3-4.2-5.7 3.5 2.3-6.3-5-4.5 6.7-.1z" fill="#f8e820" stroke="#222" stroke-width="1.5" stroke-linejoin="miter"/></g><rect x="14" y="670" width="40" height="32" fill="#e4e4e4"/><rect x="56" y="670" width="40" height="32" fill="#e4e4e4"/><rect x="98" y="670" width="39" height="32" fill="#e4e4e4"/><rect x="140" y="670" width="40" height="32" fill="#e4e4e4"/><rect x="182.5" y="670" width="39.5" height="32" fill="#e4e4e4"/><rect x="14" y="705.5" width="40" height="16.5" fill="#e4e4e4"/><rect x="56" y="705.5" width="40" height="16.5" fill="#e4e4e4"/><rect x="98" y="705.5" width="30" height="16.5" fill="#f8f8f8"/><rect x="133" y="712" width="5" height="10" fill="#d2d2d2"/><g transform="translate(133 705.5)" fill="#000"><rect x="0" y="2" width="5.5" height="1.6"/><rect x="1.2" y="3.5" width="3" height="2.2"/><rect x="0" y="5.5" width="5.5" height="1.3"/><rect x="2.2" y="6.5" width="1.1" height="3.5"/></g><g transform="translate(14 670)"><path d="M9 20q9-2 18-1l-2 2z" fill="#d0d0d0" filter="url(#sh)"/><path d="M3.5 3v26" stroke="#5a5a5a" stroke-width="1.2" stroke-dasharray="5 1.5"/><rect x="13.5" y="9.5" width="12" height="10.5" fill="none" stroke="#5a5a5a" stroke-width="1.6"/><path d="M6 14.5h7" stroke="#5a5a5a" stroke-width="1.6"/><path d="M5 14.5l3.5-3v6z" fill="#5a5a5a"/></g><g transform="translate(56 670)"><path d="M5 20q9-2 20-1l-2 2z" fill="#d0d0d0" filter="url(#sh)"/><path d="M31 3v26" stroke="#5a5a5a" stroke-width="1.2" stroke-dasharray="5 1.5"/><rect x="8" y="9.5" width="12" height="10.5" fill="none" stroke="#5a5a5a" stroke-width="1.6"/><path d="M21 14.5h7" stroke="#5a5a5a" stroke-width="1.6"/><path d="M29.5 14.5l-3.5-3v6z" fill="#5a5a5a"/></g><g transform="translate(98 670)"><path d="M6 21q11-2 24-1l-2 2z" fill="#d4d4d4" filter="url(#sh)"/><path d="M4 3.5h25" stroke="#5a5a5a" stroke-width="1.2" stroke-dasharray="6 1.5"/><rect x="11.5" y="15.5" width="11" height="10.5" fill="none" stroke="#5a5a5a" stroke-width="1.6"/><path d="M17 8v6" stroke="#5a5a5a" stroke-width="1.6"/><path d="M17 6l3 3.5h-6z" fill="#5a5a5a"/></g><g transform="translate(140 670)"><path d="M12 22q7-3 15-3l-4 4z" fill="#c8c8c8" filter="url(#sh)"/><path d="M2 28.5h26" stroke="#5a5a5a" stroke-width="1.2" stroke-dasharray="6 1.5"/><rect x="9.5" y="5.5" width="11" height="10.5" fill="none" stroke="#5a5a5a" stroke-width="1.6"/><path d="M15 18v6" stroke="#5a5a5a" stroke-width="1.6"/><path d="M15 26.5l3-3.5h-6z" fill="#5a5a5a"/></g><g transform="translate(182.5 670)"><path d="M6 22q10-2 22-1l-2 2.5z" fill="#d0d0d0" filter="url(#sh)"/><path d="M2.5 3v26M28 3v26" stroke="#5a5a5a" stroke-width="1.2" stroke-dasharray="5 1.5"/><rect x="10" y="9.5" width="11" height="10.5" fill="none" stroke="#5a5a5a" stroke-width="1.6"/><path d="M4 14.5h5M22 14.5h5" stroke="#5a5a5a" stroke-width="1.4"/><path d="M6 12l2.5 2.5L6 17 3.5 14.5zM24.5 12l2.5 2.5-2.5 2.5-2.5-2.5z" fill="#5a5a5a"/></g><g transform="translate(14 705.5)"><path d="M3 2.5h27" stroke="#5a5a5a" stroke-width="1.2" stroke-dasharray="6 1.5"/><path d="M17 4.5l3 3h-6z" fill="#5a5a5a"/><path d="M17 7v3" stroke="#5a5a5a" stroke-width="1.5"/><path d="M11 17v-5h12v5" fill="none" stroke="#5a5a5a" stroke-width="1.6"/></g><g transform="translate(56 705.5)"><rect x="4" y="2.5" width="27" height="16" fill="none" stroke="#5a5a5a" stroke-width="1.2" stroke-dasharray="5 1.5"/><path d="M18 4.5l3 3h-6z" fill="#5a5a5a"/><path d="M18 7v3" stroke="#5a5a5a" stroke-width="1.5"/><path d="M12 17v-5h12v5" fill="none" stroke="#5a5a5a" stroke-width="1.6"/></g><g transform="translate(98 705.5)"><rect x="3" y="2.5" width="25" height="16" fill="none" stroke="#888" stroke-width="1" stroke-dasharray="1 2"/><path d="M15.5 5l2.5 3h-5z" fill="#5a5a5a"/><path d="M15.5 7v4" stroke="#5a5a5a" stroke-width="1.2"/><path d="M10 17v-4.5h11v4.5" fill="none" stroke="#5a5a5a" stroke-width="1.5"/></g><text font-family="Liberation Sans,sans-serif" font-size="6" font-weight="bold" fill="#111"><tspan x="145" y="721" rotate="-50">a</tspan><tspan x="148.5" y="716" rotate="-25">a</tspan><tspan x="153" y="713.5" rotate="0">a</tspan><tspan x="160" y="714.5" rotate="30">a</tspan><tspan x="165" y="719" rotate="60">c</tspan></text><text x="185.5" y="719.5" font-family="Liberation Sans,sans-serif" font-size="13.5" font-weight="bold" fill="#000" stroke="#000" stroke-width=".5" textLength="25.5" lengthAdjust="spacingAndGlyphs">Nes</text><text x="185.5" y="730.5" font-family="Liberation Sans,sans-serif" font-size="13.5" font-weight="bold" fill="#000" stroke="#000" stroke-width=".5" textLength="25.5" lengthAdjust="spacingAndGlyphs">Nes</text></svg><div class="a" style="left:252px;top:0;width:17px;height:678px;background:#f0f0f0"></div><div class="a" style="left:253px;top:34px;width:15px;height:355px;background:#cdcdcd"></div><svg class="a" style="left:255px;top:16px" width="11" height="9" viewBox="0 0 11 9"><path d="M0.5 8L5.5 3 10.5 8" fill="none" stroke="#5a5a5a" stroke-width="2.6"/></svg><svg class="a" style="left:255px;top:650px" width="11" height="9" viewBox="0 0 11 9"><path d="M0.5 1L5.5 6 10.5 1" fill="none" stroke="#5a5a5a" stroke-width="2.6"/></svg></div><div class="a" style="left:270px;top:44px;width:1px;height:678px;background:#a0a0a0"></div><div class="a" style="left:271px;top:44px;width:1px;height:678px;background:#fff"></div><div class="a" id="ltabs" style="left:0;top:722px;width:271px;height:25px;background:#d2d2d2"></div><svg class="a" style="left:0;top:721px" width="272" height="27" viewBox="0 0 272 27"><defs><filter id="nz" color-interpolation-filters="sRGB" x="0" y="0" width="100%" height="100%"><feTurbulence type="fractalNoise" baseFrequency="0.16 0.2" numOctaves="2" seed="7"/><feColorMatrix type="matrix" values="0.32 0 0 0 0.675  0.32 0 0 0 0.675  0.32 0 0 0 0.675  0 0 0 0 1"/></filter></defs><rect x="0" y="1" width="271" height="25" fill="#c9c9c9"/><rect x="0" y="1" width="271" height="25" filter="url(#nz)"/><path d="M0 1H62V21q0 4 -4 4H0z" fill="#f0f0f0"/><path d="M62 1V21q0 4 -4 4H0" fill="none" stroke="#a8a8a8" stroke-width="1"/><path d="M62.5 1.5H124q4 0 4 4V21q0 4 -4 4H62.5" fill="#f0f0f0" stroke="#a8a8a8" stroke-width="1"/><path d="M128 1.5H271M0 26.5H271" stroke="#a6a6a6" stroke-width="1"/></svg><div class="t" style="left:8px;top:727px;font-size:12px;letter-spacing:-0.2px">Assistant</div><div class="t" style="left:70.5px;top:728px;font-size:12px;letter-spacing:0.1px">Toolpaths</div><div class="a" style="left:276px;top:43px;width:814px;height:1px;background:#a0a0a0"></div><div class="a" style="left:276px;top:44px;width:814px;height:1px;background:#fff"></div><div class="a" style="left:1089px;top:44px;width:1px;height:659px;background:#fff"></div><div class="a" style="left:277px;top:702px;width:813px;height:1px;background:#fff"></div><div class="t" style="left:284.5px;top:50px;font-size:15px;font-weight:bold;-webkit-text-stroke:0.4px #000;transform:scaleX(0.8);transform-origin:0 0">3D</div><svg class="a" style="left:0;top:0" width="1366" height="768" viewBox="0 0 1366 768"><g transform="translate(314.5 56.5)"><path d="M5.5 5.5l2.3 2" stroke="#c79c6a" stroke-width="4.2" stroke-linecap="round"/><circle r="6" fill="#d4e8f4" stroke="#54748f" stroke-width="1.5"/><circle r="4.3" fill="none" stroke="#eef7fc" stroke-width="1"/><path d="M-3.5 0h7M0-3.5v7" stroke="#1d4a73" stroke-width="1.6"/></g><g transform="translate(337.5 56.5)"><path d="M5.5 5.5l2.3 2" stroke="#c79c6a" stroke-width="4.2" stroke-linecap="round"/><circle r="6" fill="#d4e8f4" stroke="#54748f" stroke-width="1.5"/><circle r="4.3" fill="none" stroke="#eef7fc" stroke-width="1"/><path d="M-3.5 0h7" stroke="#1d4a73" stroke-width="1.6"/></g><g transform="translate(360.5 56.5)"><path d="M5.5 5.5l2.3 2" stroke="#c79c6a" stroke-width="4.2" stroke-linecap="round"/><circle r="6" fill="#d4e8f4" stroke="#54748f" stroke-width="1.5"/><circle r="4.3" fill="none" stroke="#eef7fc" stroke-width="1"/><path d="M1-3q3 .5 3 3t-3 3.2q-2 0-3-1.5" fill="none" stroke="#9aa81c" stroke-width="1.8"/><path d="M-3.8-3.5l4.5-.8-2 4z" fill="#9aa81c"/></g><g transform="translate(392 56.5)"><path d="M5.5 5.5l2.3 2" stroke="#c79c6a" stroke-width="4.2" stroke-linecap="round"/><circle r="6" fill="#d4e8f4" stroke="#54748f" stroke-width="1.5"/><circle r="4.3" fill="none" stroke="#eef7fc" stroke-width="1"/><text x="0" y="2.8" text-anchor="middle" font-family="Liberation Sans,sans-serif" font-size="7.5" font-weight="bold" fill="#2a5a86">1:1</text></g><g transform="translate(415 56.5)"><path d="M5.5 5.5l2.3 2" stroke="#c79c6a" stroke-width="4.2" stroke-linecap="round"/><circle r="6" fill="#d4e8f4" stroke="#54748f" stroke-width="1.5"/><circle r="4.3" fill="none" stroke="#eef7fc" stroke-width="1"/><rect x="-3.5" y="-3" width="7" height="6" fill="#b8d8ec" stroke="#1d4a73" stroke-width="1.3"/></g><path d="M431.5 57q0-6.5 6.5-6.5 5 0 6 4.5l1 3.5 2 3.5-2 .5.5 2.5h-5.5l-1-2.5q-7.5 1-7.5-5.5z" fill="#9c9c9c"/><path d="M377.5 50V68" stroke="#a0a0a0"/><path d="M378.5 50V68" stroke="#fff"/><path d="M454.5 50V68" stroke="#a0a0a0"/><path d="M455.5 50V68" stroke="#fff"/><path d="M531.5 50V68" stroke="#a0a0a0"/><path d="M532.5 50V68" stroke="#fff"/><rect x="459.5" y="48.5" width="22" height="21" fill="#f9f9f9" stroke="#d8d8d8"/><path d="M459.5 69.5V48.5h22" fill="none" stroke="#a8a8a8"/><rect x="482.5" y="48.5" width="22" height="21" fill="#f9f9f9" stroke="#d8d8d8"/><path d="M482.5 69.5V48.5h22" fill="none" stroke="#a8a8a8"/><g transform="translate(463 51)"><path d="M1.5 1.5h10v15h-10z" fill="#fff" stroke="#222" stroke-width="1" stroke-dasharray="1.5 1.5"/><path d="M3 5h4M3 8h3M3 11h4M3 14h5" stroke="#333" stroke-width="1" stroke-dasharray="1 1"/><path d="M5.5 8.5l5-5v3h5.5v4.5h-5.5v3z" fill="#4a4a4a" stroke="#111" stroke-width=".8"/></g><g transform="translate(485 51)"><path d="M5.5 1.5h10v15h-10z" fill="#fff" stroke="#222" stroke-width="1" stroke-dasharray="1.5 1.5"/><path d="M10 5h4M11 8h3M10 11h4M9 14h5" stroke="#333" stroke-width="1" stroke-dasharray="1 1"/><path d="M12 8.5l-5-5v3H1.5v4.5H7v3z" fill="#4a4a4a" stroke="#111" stroke-width=".8"/></g><g transform="translate(508 51)"><path d="M0 8L9 1.5v13z" fill="#5a68c8"/><path d="M0 8L9 1.5v4z" fill="#8a96e4"/><circle cx="9.5" cy="7" r="4.3" fill="#c8dcf0" stroke="#8aa0c0" stroke-width="1"/><path d="M12 10l4 4.5" stroke="#c79c6a" stroke-width="2.6" stroke-linecap="round"/></g><path d="M544 59.5H617" stroke="#8c8c8c" stroke-width="1.6"/><path d="M544 60.7H617" stroke="#fdfdfd" stroke-width="1"/><path d="M619 51h8.5v15l-4 4H619z" fill="#f3f3f3"/><path d="M627.5 50.5v15.5l-4 4" fill="none" stroke="#555" stroke-width="1.3"/><path d="M619.5 70V51" stroke="#fff" stroke-width="1"/></svg><svg class="a" style="left:0;top:0" width="1366" height="768" viewBox="0 0 1366 768" shape-rendering="crispEdges"><rect x="277.5" y="74.5" width="794" height="20" fill="#f0f0f0" stroke="#9a9a9a"/><rect x="277.5" y="74.5" width="20" height="20" fill="#f0f0f0" stroke="#9a9a9a"/><path d="M278 75.5H1071M278.5 75V94" stroke="#fff" fill="none"/><rect x="277.5" y="94.5" width="20" height="590" fill="#f0f0f0" stroke="#9a9a9a"/><path d="M278.5 95V684" stroke="#fff" fill="none"/><path d="M281 84.5h4m1 0h4m1 0h3M287.5 78v3m0 1v5m0 1v3M284.5 81v1m0 5v1M290.5 81v1m0 5v1" stroke="#b4b4b4" fill="none"/><path d="M300.5 92V94M307.5 90V94M314.5 92V94M320.5 92V94M327.5 92V94M334.5 92V94M341.5 88V94M348.5 92V94M354.5 92V94M361.5 92V94M368.5 92V94M375.5 90V94M382.5 92V94M388.5 92V94M395.5 92V94M402.5 92V94M409.5 88V94M416.5 92V94M422.5 92V94M429.5 92V94M436.5 92V94M443.5 90V94M450.5 92V94M456.5 92V94M463.5 92V94M470.5 92V94M477.5 88V94M484.5 92V94M490.5 92V94M497.5 92V94M504.5 92V94M511.5 90V94M518.5 92V94M525.5 92V94M531.5 92V94M538.5 92V94M545.5 88V94M552.5 92V94M559.5 92V94M565.5 92V94M572.5 92V94M579.5 90V94M586.5 92V94M593.5 92V94M599.5 92V94M606.5 92V94M613.5 88V94M620.5 92V94M627.5 92V94M633.5 92V94M640.5 92V94M647.5 90V94M654.5 92V94M661.5 92V94M667.5 92V94M674.5 92V94M681.5 88V94M688.5 92V94M695.5 92V94M701.5 92V94M708.5 92V94M715.5 90V94M722.5 92V94M729.5 92V94M735.5 92V94M742.5 92V94M749.5 88V94M756.5 92V94M763.5 92V94M769.5 92V94M776.5 92V94M783.5 90V94M790.5 92V94M797.5 92V94M803.5 92V94M810.5 92V94M817.5 88V94M824.5 92V94M831.5 92V94M837.5 92V94M844.5 92V94M851.5 90V94M858.5 92V94M865.5 92V94M872.5 92V94M878.5 92V94M885.5 88V94M892.5 92V94M899.5 92V94M906.5 92V94M912.5 92V94M919.5 90V94M926.5 92V94M933.5 92V94M940.5 92V94M946.5 92V94M953.5 88V94M960.5 92V94M967.5 92V94M974.5 92V94M980.5 92V94M987.5 90V94M994.5 92V94M1001.5 92V94M1008.5 92V94M1014.5 92V94M1021.5 88V94M1028.5 92V94M1035.5 92V94M1042.5 92V94M1048.5 92V94M1055.5 90V94M1062.5 92V94M1069.5 92V94" stroke="#000" fill="none"/><path d="M295 681.5H297M295 674.5H297M295 667.5H297M291 661.5H297M295 654.5H297M295 647.5H297M295 640.5H297M295 633.5H297M293 627.5H297M295 620.5H297M295 613.5H297M295 606.5H297M295 599.5H297M291 593.5H297M295 586.5H297M295 579.5H297M295 572.5H297M295 565.5H297M293 559.5H297M295 552.5H297M295 545.5H297M295 538.5H297M295 531.5H297M291 524.5H297M295 518.5H297M295 511.5H297M295 504.5H297M295 497.5H297M293 490.5H297M295 484.5H297M295 477.5H297M295 470.5H297M295 463.5H297M291 456.5H297M295 450.5H297M295 443.5H297M295 436.5H297M295 429.5H297M293 422.5H297M295 416.5H297M295 409.5H297M295 402.5H297M295 395.5H297M291 388.5H297M295 382.5H297M295 375.5H297M295 368.5H297M295 361.5H297M293 354.5H297M295 348.5H297M295 341.5H297M295 334.5H297M295 327.5H297M291 320.5H297M295 314.5H297M295 307.5H297M295 300.5H297M295 293.5H297M293 286.5H297M295 280.5H297M295 273.5H297M295 266.5H297M295 259.5H297M291 252.5H297M295 246.5H297M295 239.5H297M295 232.5H297M295 225.5H297M293 218.5H297M295 211.5H297M295 205.5H297M295 198.5H297M295 191.5H297M291 184.5H297M295 177.5H297M295 171.5H297M295 164.5H297M295 157.5H297M293 150.5H297M295 143.5H297M295 137.5H297M295 130.5H297M295 123.5H297M291 116.5H297M295 109.5H297M295 103.5H297M295 96.5H297" stroke="#000" fill="none"/><rect x="549" y="77" width="2" height="17" fill="#000"/><rect x="280" y="103" width="17" height="1" fill="#000"/></svg><div class="t rl" style="left:320.3px;top:79px;width:40px;text-align:center">-1000</div><div class="t rl" style="left:388.3px;top:79px;width:40px;text-align:center">-800</div><div class="t rl" style="left:456.4px;top:79px;width:40px;text-align:center">-600</div><div class="t rl" style="left:524.4px;top:79px;width:40px;text-align:center">-400</div><div class="t rl" style="left:592.5px;top:79px;width:40px;text-align:center">-200</div><div class="t rl" style="left:660.5px;top:79px;width:40px;text-align:center">0</div><div class="t rl" style="left:728.5px;top:79px;width:40px;text-align:center">200</div><div class="t rl" style="left:796.6px;top:79px;width:40px;text-align:center">400</div><div class="t rl" style="left:864.6px;top:79px;width:40px;text-align:center">600</div><div class="t rl" style="left:932.7px;top:79px;width:40px;text-align:center">800</div><div class="t rl" style="left:266px;top:656.1px;width:40px;height:10px;text-align:center;transform:rotate(-90deg)">-800</div><div class="t rl" style="left:266px;top:588px;width:40px;height:10px;text-align:center;transform:rotate(-90deg)">-600</div><div class="t rl" style="left:266px;top:520px;width:40px;height:10px;text-align:center;transform:rotate(-90deg)">-400</div><div class="t rl" style="left:266px;top:451.9px;width:40px;height:10px;text-align:center;transform:rotate(-90deg)">-200</div><div class="t rl" style="left:266px;top:383.9px;width:40px;height:10px;text-align:center;transform:rotate(-90deg)">0</div><div class="t rl" style="left:266px;top:315.9px;width:40px;height:10px;text-align:center;transform:rotate(-90deg)">200</div><div class="t rl" style="left:266px;top:247.8px;width:40px;height:10px;text-align:center;transform:rotate(-90deg)">400</div><div class="t rl" style="left:266px;top:179.8px;width:40px;height:10px;text-align:center;transform:rotate(-90deg)">600</div><div class="t rl" style="left:266px;top:111.7px;width:40px;height:10px;text-align:center;transform:rotate(-90deg)">800</div><div class="t" style="left:1028px;top:79.5px;font-size:9px;letter-spacing:0.05px">millimetres</div><div class="a" style="left:1071px;top:74px;width:17px;height:21px;background:#f0f0f0;border:1px solid #fff;border-right-color:#9a9a9a;border-bottom-color:#9a9a9a;box-sizing:border-box"></div><svg class="a" style="left:1074px;top:79px" width="11" height="11" viewBox="0 0 11 11" shape-rendering="crispEdges"><path d="M1 1.5h4m1 0h4" stroke="#000" stroke-width="1" fill="none"/><path d="M0.5 4h10L5.5 9z" fill="#000" shape-rendering="auto"/></svg><div class="a" style="left:277px;top:684px;width:21px;height:18px;background:#f0f0f0;border:1px solid #fff;border-right-color:#9a9a9a;border-bottom-color:#9a9a9a;box-sizing:border-box"></div><svg class="a" style="left:283px;top:688px" width="10" height="10" viewBox="0 0 10 10"><path d="M1.5 1v3m0 2v3" stroke="#000" stroke-width="1.4" fill="none" shape-rendering="crispEdges"/><path d="M4 0.5v9L9 5z" fill="#000"/></svg><div class="a" style="left:1072px;top:95px;width:16px;height:590px;background:#f0f0f0"></div><div class="a" style="left:1072px;top:112px;width:15.5px;height:556px;background:#cdcdcd"></div><svg class="a" style="left:1074.5px;top:100px" width="10" height="8" viewBox="0 0 10 8"><path d="M1 6.5L5 2.5 9 6.5" fill="none" stroke="#505050" stroke-width="2.2"/></svg><svg class="a" style="left:1074.5px;top:672.5px" width="10" height="8" viewBox="0 0 10 8"><path d="M1 1.5L5 5.5 9 1.5" fill="none" stroke="#505050" stroke-width="2.2"/></svg><div class="a" style="left:298px;top:685px;width:774px;height:17px;background:#f0f0f0"></div><div class="a" style="left:315px;top:686px;width:739px;height:14.5px;background:#cdcdcd"></div><svg class="a" style="left:302px;top:688px" width="8" height="10" viewBox="0 0 8 10"><path d="M6.5 1L2.5 5 6.5 9" fill="none" stroke="#505050" stroke-width="2.2"/></svg><svg class="a" style="left:1059px;top:688px" width="8" height="10" viewBox="0 0 8 10"><path d="M1.5 1L5.5 5 1.5 9" fill="none" stroke="#505050" stroke-width="2.2"/></svg><div class="a" style="left:298px;top:684px;width:774px;height:1px;background:#f8f8f8"></div><div class="a" style="left:1071px;top:95px;width:1px;height:590px;background:#f8f8f8"></div><svg class="a" style="left:0;top:0" width="1366" height="768" viewBox="0 0 1366 768"><defs><radialGradient id="fl" cx="50%" cy="50%" r="50%"><stop offset="0" stop-color="#eef4dc"/><stop offset="0.28" stop-color="#e4e8da"/><stop offset="0.5" stop-color="#8e8e9c"/><stop offset="0.68" stop-color="#c4c2d0"/><stop offset="1" stop-color="#f6f3fa"/></radialGradient><linearGradient id="lf" x1="0" y1="0" x2="1" y2="1"><stop offset="0" stop-color="#2c2c30"/><stop offset="0.5" stop-color="#8a8a90"/><stop offset="1" stop-color="#303034"/></linearGradient></defs><g shape-rendering="crispEdges"><rect x="579.5" y="116.5" width="205" height="546" fill="#ffff80" stroke="#000"/><rect x="583" y="181" width="200.5" height="10" fill="#f8f8f8"/><rect x="583" y="200" width="200.5" height="10" fill="#f8f8f8"/><rect x="583" y="218" width="200.5" height="10" fill="#f8f8f8"/><rect x="583" y="550" width="200.5" height="10" fill="#f8f8f8"/><rect x="583" y="568" width="200.5" height="10" fill="#f8f8f8"/><rect x="583" y="587" width="200.5" height="10" fill="#f8f8f8"/><path d="M582 209.5H783" stroke="#3c3c20" fill="none"/><path d="M582 217.5H783" stroke="#4a4a28" fill="none"/><path d="M582 549.5H783" stroke="#77773c" fill="none"/><path d="M582 578.5H783" stroke="#8c8c50" fill="none"/><path d="M582 586.5H783" stroke="#1a1a10" fill="none"/><path d="M582 597.5H783" stroke="#1a1a10" fill="none"/><rect x="641" y="236" width="82" height="304" fill="#f8f8f8"/><rect x="647" y="242" width="69" height="292" fill="#ffff80"/><path d="M716.5 243V534" stroke="#4a4a2a" fill="none"/><path d="M723.5 238V540" stroke="#3a3a20" fill="none"/></g><g transform="translate(596 258)"><rect x="0" y="0" width="31" height="31" fill="#1c150a"/><rect x="2" y="2" width="27" height="26.5" fill="#6e6250"/><rect x="3.5" y="3.2" width="24.5" height="23.3" fill="#fcfc88"/><rect x="3.5" y="27.3" width="25" height="1.3" fill="#1c150a"/><g fill="none" stroke="#2a2a20" stroke-width="1.3" stroke-dasharray="2.2 2.6"><circle cx="21" cy="18" r="5.2"/><circle cx="15.6" cy="21.3" r="5.2"/><circle cx="10.1" cy="18.3" r="5.2"/><circle cx="10" cy="12" r="5.2"/><circle cx="15.4" cy="8.7" r="5.2"/><circle cx="20.9" cy="11.7" r="5.2"/></g><g fill="#f6f3fa"><circle cx="21" cy="18" r="5.2"/><circle cx="15.6" cy="21.3" r="5.2"/><circle cx="10.1" cy="18.3" r="5.2"/><circle cx="10" cy="12" r="5.2"/><circle cx="15.4" cy="8.7" r="5.2"/><circle cx="20.9" cy="11.7" r="5.2"/></g><circle cx="15.5" cy="15" r="8.5" fill="url(#fl)"/></g><g transform="translate(596 365)"><rect x="0" y="0" width="31" height="31" fill="#1c150a"/><rect x="2" y="2" width="27" height="26.5" fill="#6e6250"/><rect x="3.5" y="3.2" width="24.5" height="23.3" fill="#fcfc88"/><rect x="3.5" y="27.3" width="25" height="1.3" fill="#1c150a"/><g fill="none" stroke="#2a2a20" stroke-width="1.3" stroke-dasharray="2.2 2.6"><circle cx="21" cy="18" r="5.2"/><circle cx="15.6" cy="21.3" r="5.2"/><circle cx="10.1" cy="18.3" r="5.2"/><circle cx="10" cy="12" r="5.2"/><circle cx="15.4" cy="8.7" r="5.2"/><circle cx="20.9" cy="11.7" r="5.2"/></g><g fill="#f6f3fa"><circle cx="21" cy="18" r="5.2"/><circle cx="15.6" cy="21.3" r="5.2"/><circle cx="10.1" cy="18.3" r="5.2"/><circle cx="10" cy="12" r="5.2"/><circle cx="15.4" cy="8.7" r="5.2"/><circle cx="20.9" cy="11.7" r="5.2"/></g><circle cx="15.5" cy="15" r="8.5" fill="url(#fl)"/></g><g transform="translate(596 484)"><rect x="0" y="0" width="31" height="31" fill="#1c150a"/><rect x="2" y="2" width="27" height="26.5" fill="#6e6250"/><rect x="3.5" y="3.2" width="24.5" height="23.3" fill="#fcfc88"/><rect x="3.5" y="27.3" width="25" height="1.3" fill="#1c150a"/><g fill="none" stroke="#2a2a20" stroke-width="1.3" stroke-dasharray="2.2 2.6"><circle cx="21" cy="18" r="5.2"/><circle cx="15.6" cy="21.3" r="5.2"/><circle cx="10.1" cy="18.3" r="5.2"/><circle cx="10" cy="12" r="5.2"/><circle cx="15.4" cy="8.7" r="5.2"/><circle cx="20.9" cy="11.7" r="5.2"/></g><g fill="#f6f3fa"><circle cx="21" cy="18" r="5.2"/><circle cx="15.6" cy="21.3" r="5.2"/><circle cx="10.1" cy="18.3" r="5.2"/><circle cx="10" cy="12" r="5.2"/><circle cx="15.4" cy="8.7" r="5.2"/><circle cx="20.9" cy="11.7" r="5.2"/></g><circle cx="15.5" cy="15" r="8.5" fill="url(#fl)"/></g><g transform="translate(737 258)"><rect x="0" y="0" width="31" height="31" fill="#1c150a"/><rect x="2" y="2" width="27" height="26.5" fill="#6e6250"/><rect x="3.5" y="3.2" width="24.5" height="23.3" fill="#fcfc88"/><rect x="3.5" y="27.3" width="25" height="1.3" fill="#1c150a"/><g fill="none" stroke="#2a2a20" stroke-width="1.3" stroke-dasharray="2.2 2.6"><circle cx="21" cy="18" r="5.2"/><circle cx="15.6" cy="21.3" r="5.2"/><circle cx="10.1" cy="18.3" r="5.2"/><circle cx="10" cy="12" r="5.2"/><circle cx="15.4" cy="8.7" r="5.2"/><circle cx="20.9" cy="11.7" r="5.2"/></g><g fill="#f6f3fa"><circle cx="21" cy="18" r="5.2"/><circle cx="15.6" cy="21.3" r="5.2"/><circle cx="10.1" cy="18.3" r="5.2"/><circle cx="10" cy="12" r="5.2"/><circle cx="15.4" cy="8.7" r="5.2"/><circle cx="20.9" cy="11.7" r="5.2"/></g><circle cx="15.5" cy="15" r="8.5" fill="url(#fl)"/></g><g transform="translate(737 365)"><rect x="0" y="0" width="31" height="31" fill="#1c150a"/><rect x="2" y="2" width="27" height="26.5" fill="#6e6250"/><rect x="3.5" y="3.2" width="24.5" height="23.3" fill="#fcfc88"/><rect x="3.5" y="27.3" width="25" height="1.3" fill="#1c150a"/><g fill="none" stroke="#2a2a20" stroke-width="1.3" stroke-dasharray="2.2 2.6"><circle cx="21" cy="18" r="5.2"/><circle cx="15.6" cy="21.3" r="5.2"/><circle cx="10.1" cy="18.3" r="5.2"/><circle cx="10" cy="12" r="5.2"/><circle cx="15.4" cy="8.7" r="5.2"/><circle cx="20.9" cy="11.7" r="5.2"/></g><g fill="#f6f3fa"><circle cx="21" cy="18" r="5.2"/><circle cx="15.6" cy="21.3" r="5.2"/><circle cx="10.1" cy="18.3" r="5.2"/><circle cx="10" cy="12" r="5.2"/><circle cx="15.4" cy="8.7" r="5.2"/><circle cx="20.9" cy="11.7" r="5.2"/></g><circle cx="15.5" cy="15" r="8.5" fill="url(#fl)"/></g><g transform="translate(737 484)"><rect x="0" y="0" width="31" height="31" fill="#1c150a"/><rect x="2" y="2" width="27" height="26.5" fill="#6e6250"/><rect x="3.5" y="3.2" width="24.5" height="23.3" fill="#fcfc88"/><rect x="3.5" y="27.3" width="25" height="1.3" fill="#1c150a"/><g fill="none" stroke="#2a2a20" stroke-width="1.3" stroke-dasharray="2.2 2.6"><circle cx="21" cy="18" r="5.2"/><circle cx="15.6" cy="21.3" r="5.2"/><circle cx="10.1" cy="18.3" r="5.2"/><circle cx="10" cy="12" r="5.2"/><circle cx="15.4" cy="8.7" r="5.2"/><circle cx="20.9" cy="11.7" r="5.2"/></g><g fill="#f6f3fa"><circle cx="21" cy="18" r="5.2"/><circle cx="15.6" cy="21.3" r="5.2"/><circle cx="10.1" cy="18.3" r="5.2"/><circle cx="10" cy="12" r="5.2"/><circle cx="15.4" cy="8.7" r="5.2"/><circle cx="20.9" cy="11.7" r="5.2"/></g><circle cx="15.5" cy="15" r="8.5" fill="url(#fl)"/></g><g clip-path="url(#vclip)"><clipPath id="vclip"><rect x="648" y="243" width="68" height="290.5"/></clipPath><defs><radialGradient id="lg" cx=".45" cy=".5" r=".6"><stop offset="0" stop-color="#b0b0b6"/><stop offset=".5" stop-color="#76767c"/><stop offset="1" stop-color="#38383c"/></radialGradient><filter id="vb" x="-10%" y="-10%" width="120%" height="120%"><feGaussianBlur stdDeviation="0.5"/></filter></defs><g transform="translate(673.3 270) scale(-1 1) rotate(-25)" fill="none" stroke-linecap="round"><path d="M0 0C4 0 9-1 11-5" stroke="#2a2a2e" stroke-width="6.6"/><circle cx="11.2" cy="-6.2" r="4.5" fill="#2a2a2e"/><path d="M0 0C4 0 9-1 11-5" stroke="#66666c" stroke-width="4.2"/><circle cx="11.2" cy="-6.2" r="3" fill="#66666c"/><path d="M0 0C4 0 9-1 11-5" stroke="#a0a0a6" stroke-width="1.5"/><circle cx="10.799999999999999" cy="-6.6000000000000005" r="1.5" fill="#9c9ca2"/></g><g transform="translate(672.9 285) scale(-1 1) rotate(-5)" fill="none" stroke-linecap="round"><path d="M0 0C3 .5 7 0 8.5-2.5" stroke="#2a2a2e" stroke-width="6.6"/><circle cx="8.7" cy="-3.5" r="4.1" fill="#2a2a2e"/><path d="M0 0C3 .5 7 0 8.5-2.5" stroke="#66666c" stroke-width="4.2"/><circle cx="8.7" cy="-3.5" r="2.6" fill="#66666c"/><path d="M0 0C3 .5 7 0 8.5-2.5" stroke="#a0a0a6" stroke-width="1.5"/><circle cx="8.299999999999999" cy="-3.9" r="1.3" fill="#9c9ca2"/></g><g transform="translate(680.4 297) scale(-1 1) rotate(8)" fill="none" stroke-linecap="round"><path d="M0 0C5 1.5 11 1 15-2.5" stroke="#2a2a2e" stroke-width="6.6"/><circle cx="15.3" cy="-3.6" r="4.7" fill="#2a2a2e"/><path d="M0 0C5 1.5 11 1 15-2.5" stroke="#66666c" stroke-width="4.2"/><circle cx="15.3" cy="-3.6" r="3.2" fill="#66666c"/><path d="M0 0C5 1.5 11 1 15-2.5" stroke="#a0a0a6" stroke-width="1.5"/><circle cx="14.9" cy="-4" r="1.6" fill="#9c9ca2"/></g><g transform="translate(683.7 301) scale(1.05 1.05) rotate(-38)" fill="none" stroke-linecap="round"><path d="M0 0C5 1.5 11 1 15-2.5" stroke="#2a2a2e" stroke-width="6.6"/><circle cx="15.3" cy="-3.6" r="4.7" fill="#2a2a2e"/><path d="M0 0C5 1.5 11 1 15-2.5" stroke="#66666c" stroke-width="4.2"/><circle cx="15.3" cy="-3.6" r="3.2" fill="#66666c"/><path d="M0 0C5 1.5 11 1 15-2.5" stroke="#a0a0a6" stroke-width="1.5"/><circle cx="14.9" cy="-4" r="1.6" fill="#9c9ca2"/></g><g transform="translate(693.7 315.5) scale(1 1) rotate(-25)" fill="none" stroke-linecap="round"><path d="M0 0C4 0 9-1 11-5" stroke="#2a2a2e" stroke-width="6.6"/><circle cx="11.2" cy="-6.2" r="4.5" fill="#2a2a2e"/><path d="M0 0C4 0 9-1 11-5" stroke="#66666c" stroke-width="4.2"/><circle cx="11.2" cy="-6.2" r="3" fill="#66666c"/><path d="M0 0C4 0 9-1 11-5" stroke="#a0a0a6" stroke-width="1.5"/><circle cx="10.799999999999999" cy="-6.6000000000000005" r="1.5" fill="#9c9ca2"/></g><g transform="translate(694.1 330.5) scale(1 1) rotate(-5)" fill="none" stroke-linecap="round"><path d="M0 0C3 .5 7 0 8.5-2.5" stroke="#2a2a2e" stroke-width="6.6"/><circle cx="8.7" cy="-3.5" r="4.1" fill="#2a2a2e"/><path d="M0 0C3 .5 7 0 8.5-2.5" stroke="#66666c" stroke-width="4.2"/><circle cx="8.7" cy="-3.5" r="2.6" fill="#66666c"/><path d="M0 0C3 .5 7 0 8.5-2.5" stroke="#a0a0a6" stroke-width="1.5"/><circle cx="8.299999999999999" cy="-3.9" r="1.3" fill="#9c9ca2"/></g><g transform="translate(686.6 342.5) scale(1 1) rotate(8)" fill="none" stroke-linecap="round"><path d="M0 0C5 1.5 11 1 15-2.5" stroke="#2a2a2e" stroke-width="6.6"/><circle cx="15.3" cy="-3.6" r="4.7" fill="#2a2a2e"/><path d="M0 0C5 1.5 11 1 15-2.5" stroke="#66666c" stroke-width="4.2"/><circle cx="15.3" cy="-3.6" r="3.2" fill="#66666c"/><path d="M0 0C5 1.5 11 1 15-2.5" stroke="#a0a0a6" stroke-width="1.5"/><circle cx="14.9" cy="-4" r="1.6" fill="#9c9ca2"/></g><g transform="translate(683.3 346.5) scale(-1.05 1.05) rotate(-38)" fill="none" stroke-linecap="round"><path d="M0 0C5 1.5 11 1 15-2.5" stroke="#2a2a2e" stroke-width="6.6"/><circle cx="15.3" cy="-3.6" r="4.7" fill="#2a2a2e"/><path d="M0 0C5 1.5 11 1 15-2.5" stroke="#66666c" stroke-width="4.2"/><circle cx="15.3" cy="-3.6" r="3.2" fill="#66666c"/><path d="M0 0C5 1.5 11 1 15-2.5" stroke="#a0a0a6" stroke-width="1.5"/><circle cx="14.9" cy="-4" r="1.6" fill="#9c9ca2"/></g><g transform="translate(673.3 361) scale(-1 1) rotate(-25)" fill="none" stroke-linecap="round"><path d="M0 0C4 0 9-1 11-5" stroke="#2a2a2e" stroke-width="6.6"/><circle cx="11.2" cy="-6.2" r="4.5" fill="#2a2a2e"/><path d="M0 0C4 0 9-1 11-5" stroke="#66666c" stroke-width="4.2"/><circle cx="11.2" cy="-6.2" r="3" fill="#66666c"/><path d="M0 0C4 0 9-1 11-5" stroke="#a0a0a6" stroke-width="1.5"/><circle cx="10.799999999999999" cy="-6.6000000000000005" r="1.5" fill="#9c9ca2"/></g><g transform="translate(672.9 376) scale(-1 1) rotate(-5)" fill="none" stroke-linecap="round"><path d="M0 0C3 .5 7 0 8.5-2.5" stroke="#2a2a2e" stroke-width="6.6"/><circle cx="8.7" cy="-3.5" r="4.1" fill="#2a2a2e"/><path d="M0 0C3 .5 7 0 8.5-2.5" stroke="#66666c" stroke-width="4.2"/><circle cx="8.7" cy="-3.5" r="2.6" fill="#66666c"/><path d="M0 0C3 .5 7 0 8.5-2.5" stroke="#a0a0a6" stroke-width="1.5"/><circle cx="8.299999999999999" cy="-3.9" r="1.3" fill="#9c9ca2"/></g><g transform="translate(680.4 388) scale(-1 1) rotate(8)" fill="none" stroke-linecap="round"><path d="M0 0C5 1.5 11 1 15-2.5" stroke="#2a2a2e" stroke-width="6.6"/><circle cx="15.3" cy="-3.6" r="4.7" fill="#2a2a2e"/><path d="M0 0C5 1.5 11 1 15-2.5" stroke="#66666c" stroke-width="4.2"/><circle cx="15.3" cy="-3.6" r="3.2" fill="#66666c"/><path d="M0 0C5 1.5 11 1 15-2.5" stroke="#a0a0a6" stroke-width="1.5"/><circle cx="14.9" cy="-4" r="1.6" fill="#9c9ca2"/></g><g transform="translate(683.7 392) scale(1.05 1.05) rotate(-38)" fill="none" stroke-linecap="round"><path d="M0 0C5 1.5 11 1 15-2.5" stroke="#2a2a2e" stroke-width="6.6"/><circle cx="15.3" cy="-3.6" r="4.7" fill="#2a2a2e"/><path d="M0 0C5 1.5 11 1 15-2.5" stroke="#66666c" stroke-width="4.2"/><circle cx="15.3" cy="-3.6" r="3.2" fill="#66666c"/><path d="M0 0C5 1.5 11 1 15-2.5" stroke="#a0a0a6" stroke-width="1.5"/><circle cx="14.9" cy="-4" r="1.6" fill="#9c9ca2"/></g><g transform="translate(693.7 406.5) scale(1 1) rotate(-25)" fill="none" stroke-linecap="round"><path d="M0 0C4 0 9-1 11-5" stroke="#2a2a2e" stroke-width="6.6"/><circle cx="11.2" cy="-6.2" r="4.5" fill="#2a2a2e"/><path d="M0 0C4 0 9-1 11-5" stroke="#66666c" stroke-width="4.2"/><circle cx="11.2" cy="-6.2" r="3" fill="#66666c"/><path d="M0 0C4 0 9-1 11-5" stroke="#a0a0a6" stroke-width="1.5"/><circle cx="10.799999999999999" cy="-6.6000000000000005" r="1.5" fill="#9c9ca2"/></g><g transform="translate(694.1 421.5) scale(1 1) rotate(-5)" fill="none" stroke-linecap="round"><path d="M0 0C3 .5 7 0 8.5-2.5" stroke="#2a2a2e" stroke-width="6.6"/><circle cx="8.7" cy="-3.5" r="4.1" fill="#2a2a2e"/><path d="M0 0C3 .5 7 0 8.5-2.5" stroke="#66666c" stroke-width="4.2"/><circle cx="8.7" cy="-3.5" r="2.6" fill="#66666c"/><path d="M0 0C3 .5 7 0 8.5-2.5" stroke="#a0a0a6" stroke-width="1.5"/><circle cx="8.299999999999999" cy="-3.9" r="1.3" fill="#9c9ca2"/></g><g transform="translate(686.6 433.5) scale(1 1) rotate(8)" fill="none" stroke-linecap="round"><path d="M0 0C5 1.5 11 1 15-2.5" stroke="#2a2a2e" stroke-width="6.6"/><circle cx="15.3" cy="-3.6" r="4.7" fill="#2a2a2e"/><path d="M0 0C5 1.5 11 1 15-2.5" stroke="#66666c" stroke-width="4.2"/><circle cx="15.3" cy="-3.6" r="3.2" fill="#66666c"/><path d="M0 0C5 1.5 11 1 15-2.5" stroke="#a0a0a6" stroke-width="1.5"/><circle cx="14.9" cy="-4" r="1.6" fill="#9c9ca2"/></g><g transform="translate(683.3 437.5) scale(-1.05 1.05) rotate(-38)" fill="none" stroke-linecap="round"><path d="M0 0C5 1.5 11 1 15-2.5" stroke="#2a2a2e" stroke-width="6.6"/><circle cx="15.3" cy="-3.6" r="4.7" fill="#2a2a2e"/><path d="M0 0C5 1.5 11 1 15-2.5" stroke="#66666c" stroke-width="4.2"/><circle cx="15.3" cy="-3.6" r="3.2" fill="#66666c"/><path d="M0 0C5 1.5 11 1 15-2.5" stroke="#a0a0a6" stroke-width="1.5"/><circle cx="14.9" cy="-4" r="1.6" fill="#9c9ca2"/></g><g transform="translate(673.3 452) scale(-1 1) rotate(-25)" fill="none" stroke-linecap="round"><path d="M0 0C4 0 9-1 11-5" stroke="#2a2a2e" stroke-width="6.6"/><circle cx="11.2" cy="-6.2" r="4.5" fill="#2a2a2e"/><path d="M0 0C4 0 9-1 11-5" stroke="#66666c" stroke-width="4.2"/><circle cx="11.2" cy="-6.2" r="3" fill="#66666c"/><path d="M0 0C4 0 9-1 11-5" stroke="#a0a0a6" stroke-width="1.5"/><circle cx="10.799999999999999" cy="-6.6000000000000005" r="1.5" fill="#9c9ca2"/></g><g transform="translate(672.9 467) scale(-1 1) rotate(-5)" fill="none" stroke-linecap="round"><path d="M0 0C3 .5 7 0 8.5-2.5" stroke="#2a2a2e" stroke-width="6.6"/><circle cx="8.7" cy="-3.5" r="4.1" fill="#2a2a2e"/><path d="M0 0C3 .5 7 0 8.5-2.5" stroke="#66666c" stroke-width="4.2"/><circle cx="8.7" cy="-3.5" r="2.6" fill="#66666c"/><path d="M0 0C3 .5 7 0 8.5-2.5" stroke="#a0a0a6" stroke-width="1.5"/><circle cx="8.299999999999999" cy="-3.9" r="1.3" fill="#9c9ca2"/></g><g transform="translate(680.4 479) scale(-1 1) rotate(8)" fill="none" stroke-linecap="round"><path d="M0 0C5 1.5 11 1 15-2.5" stroke="#2a2a2e" stroke-width="6.6"/><circle cx="15.3" cy="-3.6" r="4.7" fill="#2a2a2e"/><path d="M0 0C5 1.5 11 1 15-2.5" stroke="#66666c" stroke-width="4.2"/><circle cx="15.3" cy="-3.6" r="3.2" fill="#66666c"/><path d="M0 0C5 1.5 11 1 15-2.5" stroke="#a0a0a6" stroke-width="1.5"/><circle cx="14.9" cy="-4" r="1.6" fill="#9c9ca2"/></g><g transform="translate(683.7 483) scale(1.05 1.05) rotate(-38)" fill="none" stroke-linecap="round"><path d="M0 0C5 1.5 11 1 15-2.5" stroke="#2a2a2e" stroke-width="6.6"/><circle cx="15.3" cy="-3.6" r="4.7" fill="#2a2a2e"/><path d="M0 0C5 1.5 11 1 15-2.5" stroke="#66666c" stroke-width="4.2"/><circle cx="15.3" cy="-3.6" r="3.2" fill="#66666c"/><path d="M0 0C5 1.5 11 1 15-2.5" stroke="#a0a0a6" stroke-width="1.5"/><circle cx="14.9" cy="-4" r="1.6" fill="#9c9ca2"/></g><g transform="translate(693.7 497.5) scale(1 1) rotate(-25)" fill="none" stroke-linecap="round"><path d="M0 0C4 0 9-1 11-5" stroke="#2a2a2e" stroke-width="6.6"/><circle cx="11.2" cy="-6.2" r="4.5" fill="#2a2a2e"/><path d="M0 0C4 0 9-1 11-5" stroke="#66666c" stroke-width="4.2"/><circle cx="11.2" cy="-6.2" r="3" fill="#66666c"/><path d="M0 0C4 0 9-1 11-5" stroke="#a0a0a6" stroke-width="1.5"/><circle cx="10.799999999999999" cy="-6.6000000000000005" r="1.5" fill="#9c9ca2"/></g><g transform="translate(694.1 512.5) scale(1 1) rotate(-5)" fill="none" stroke-linecap="round"><path d="M0 0C3 .5 7 0 8.5-2.5" stroke="#2a2a2e" stroke-width="6.6"/><circle cx="8.7" cy="-3.5" r="4.1" fill="#2a2a2e"/><path d="M0 0C3 .5 7 0 8.5-2.5" stroke="#66666c" stroke-width="4.2"/><circle cx="8.7" cy="-3.5" r="2.6" fill="#66666c"/><path d="M0 0C3 .5 7 0 8.5-2.5" stroke="#a0a0a6" stroke-width="1.5"/><circle cx="8.299999999999999" cy="-3.9" r="1.3" fill="#9c9ca2"/></g><path d="M677.4 295Q678.4 283 680.8 276" fill="none" stroke="#2c2c30" stroke-width="3.4"/><path d="M677.4 295Q678.4 283 680.8 276" fill="none" stroke="#8a8a90" stroke-width="1.3"/><path d="M689.6 340.5Q688.6 328.5 686.2 321.5" fill="none" stroke="#2c2c30" stroke-width="3.4"/><path d="M689.6 340.5Q688.6 328.5 686.2 321.5" fill="none" stroke="#8a8a90" stroke-width="1.3"/><path d="M677.4 386Q678.4 374 680.8 367" fill="none" stroke="#2c2c30" stroke-width="3.4"/><path d="M677.4 386Q678.4 374 680.8 367" fill="none" stroke="#8a8a90" stroke-width="1.3"/><path d="M689.6 431.5Q688.6 419.5 686.2 412.5" fill="none" stroke="#2c2c30" stroke-width="3.4"/><path d="M689.6 431.5Q688.6 419.5 686.2 412.5" fill="none" stroke="#8a8a90" stroke-width="1.3"/><path d="M677.4 477Q678.4 465 680.8 458" fill="none" stroke="#2c2c30" stroke-width="3.4"/><path d="M677.4 477Q678.4 465 680.8 458" fill="none" stroke="#8a8a90" stroke-width="1.3"/><path d="M689.6 522.5Q688.6 510.5 686.2 503.5" fill="none" stroke="#2c2c30" stroke-width="3.4"/><path d="M689.6 522.5Q688.6 510.5 686.2 503.5" fill="none" stroke="#8a8a90" stroke-width="1.3"/><path d="M681.2 258 L678.9 261 L676.7 264 L674.8 267 L673.3 270 L672.2 273 L671.6 276 L671.5 279 L672 282 L672.9 285 L674.2 288 L676 291 L678.1 294 L680.4 297 L682.9 300 L685.4 303 L687.8 306 L690 309 L691.9 312 L693.5 315 L694.6 318 L695.3 321 L695.5 324 L695.2 327 L694.3 330 L693 333 L691.3 336 L689.3 339 L687 342 L684.5 345 L682.1 348 L679.6 351 L677.4 354 L675.4 357 L673.7 360 L672.5 363 L671.8 366 L671.5 369 L671.8 372 L672.5 375 L673.7 378 L675.4 381 L677.4 384 L679.6 387 L682.1 390 L684.5 393 L687 396 L689.3 399 L691.3 402 L693 405 L694.3 408 L695.2 411 L695.5 414 L695.3 417 L694.6 420 L693.5 423 L691.9 426 L690 429 L687.8 432 L685.4 435 L682.9 438 L680.4 441 L678.1 444 L676 447 L674.2 450 L672.9 453 L672 456 L671.5 459 L671.6 462 L672.2 465 L673.3 468 L674.8 471 L676.7 474 L678.9 477 L681.2 480 L683.7 483 L686.2 486 L688.5 489 L690.7 492 L692.5 495 L693.9 498 L694.9 501 L695.4 504 L695.4 507 L694.9 510 L693.9 513 L692.5 516 L690.7 519 L688.5 522 L686.2 525 L683.7 528 L682 531" fill="none" stroke="#2a2a2e" stroke-width="5" stroke-linecap="round" stroke-linejoin="round"/><path d="M681.2 258 L678.9 261 L676.7 264 L674.8 267 L673.3 270 L672.2 273 L671.6 276 L671.5 279 L672 282 L672.9 285 L674.2 288 L676 291 L678.1 294 L680.4 297 L682.9 300 L685.4 303 L687.8 306 L690 309 L691.9 312 L693.5 315 L694.6 318 L695.3 321 L695.5 324 L695.2 327 L694.3 330 L693 333 L691.3 336 L689.3 339 L687 342 L684.5 345 L682.1 348 L679.6 351 L677.4 354 L675.4 357 L673.7 360 L672.5 363 L671.8 366 L671.5 369 L671.8 372 L672.5 375 L673.7 378 L675.4 381 L677.4 384 L679.6 387 L682.1 390 L684.5 393 L687 396 L689.3 399 L691.3 402 L693 405 L694.3 408 L695.2 411 L695.5 414 L695.3 417 L694.6 420 L693.5 423 L691.9 426 L690 429 L687.8 432 L685.4 435 L682.9 438 L680.4 441 L678.1 444 L676 447 L674.2 450 L672.9 453 L672 456 L671.5 459 L671.6 462 L672.2 465 L673.3 468 L674.8 471 L676.7 474 L678.9 477 L681.2 480 L683.7 483 L686.2 486 L688.5 489 L690.7 492 L692.5 495 L693.9 498 L694.9 501 L695.4 504 L695.4 507 L694.9 510 L693.9 513 L692.5 516 L690.7 519 L688.5 522 L686.2 525 L683.7 528 L682 531" fill="none" stroke="#77777d" stroke-width="3" stroke-linecap="round" stroke-linejoin="round"/><path d="M681.2 258 L678.9 261 L676.7 264 L674.8 267 L673.3 270 L672.2 273 L671.6 276 L671.5 279 L672 282 L672.9 285 L674.2 288 L676 291 L678.1 294 L680.4 297 L682.9 300 L685.4 303 L687.8 306 L690 309 L691.9 312 L693.5 315 L694.6 318 L695.3 321 L695.5 324 L695.2 327 L694.3 330 L693 333 L691.3 336 L689.3 339 L687 342 L684.5 345 L682.1 348 L679.6 351 L677.4 354 L675.4 357 L673.7 360 L672.5 363 L671.8 366 L671.5 369 L671.8 372 L672.5 375 L673.7 378 L675.4 381 L677.4 384 L679.6 387 L682.1 390 L684.5 393 L687 396 L689.3 399 L691.3 402 L693 405 L694.3 408 L695.2 411 L695.5 414 L695.3 417 L694.6 420 L693.5 423 L691.9 426 L690 429 L687.8 432 L685.4 435 L682.9 438 L680.4 441 L678.1 444 L676 447 L674.2 450 L672.9 453 L672 456 L671.5 459 L671.6 462 L672.2 465 L673.3 468 L674.8 471 L676.7 474 L678.9 477 L681.2 480 L683.7 483 L686.2 486 L688.5 489 L690.7 492 L692.5 495 L693.9 498 L694.9 501 L695.4 504 L695.4 507 L694.9 510 L693.9 513 L692.5 516 L690.7 519 L688.5 522 L686.2 525 L683.7 528 L682 531" fill="none" stroke="#b0b0b6" stroke-width="1.2" stroke-linecap="round" stroke-linejoin="round"/><g transform="translate(677.8 276) scale(1 1) rotate(-12)"><path d="M0 0C3-6 9-9 15-10L18-15 21-10.5 26-14 26-8.5 31-9 28.5-4 32-1 28 1.5 30 5.5 25 5.5 25.5 10 20 8.5 18.5 13C11 12 4 8 0 0Z" fill="#2e2e32" stroke="#28282c" stroke-width="1.2" stroke-linejoin="round"/><path d="M2 0C6-5 11-7 16-8L20-11 21-7 26-8 24-3 28-1 23 1.5 24 5 19 5 17 9C11 8 5 5 2 0Z" fill="url(#lg)" filter="url(#vb)"/><path d="M1 0Q12-2 29-5" fill="none" stroke="#b4b4ba" stroke-width="1" opacity=".85"/><path d="M10-1.5l7-9M14-2l9-7M13-2l6 8M18-3l7 5" fill="none" stroke="#3c3c40" stroke-width=".8" opacity=".8"/></g><g transform="translate(689.2 321.5) scale(-1 1) rotate(-12)"><path d="M0 0C3-6 9-9 15-10L18-15 21-10.5 26-14 26-8.5 31-9 28.5-4 32-1 28 1.5 30 5.5 25 5.5 25.5 10 20 8.5 18.5 13C11 12 4 8 0 0Z" fill="#2e2e32" stroke="#28282c" stroke-width="1.2" stroke-linejoin="round"/><path d="M2 0C6-5 11-7 16-8L20-11 21-7 26-8 24-3 28-1 23 1.5 24 5 19 5 17 9C11 8 5 5 2 0Z" fill="url(#lg)" filter="url(#vb)"/><path d="M1 0Q12-2 29-5" fill="none" stroke="#b4b4ba" stroke-width="1" opacity=".85"/><path d="M10-1.5l7-9M14-2l9-7M13-2l6 8M18-3l7 5" fill="none" stroke="#3c3c40" stroke-width=".8" opacity=".8"/></g><g transform="translate(677.8 367) scale(1 1) rotate(-12)"><path d="M0 0C3-6 9-9 15-10L18-15 21-10.5 26-14 26-8.5 31-9 28.5-4 32-1 28 1.5 30 5.5 25 5.5 25.5 10 20 8.5 18.5 13C11 12 4 8 0 0Z" fill="#2e2e32" stroke="#28282c" stroke-width="1.2" stroke-linejoin="round"/><path d="M2 0C6-5 11-7 16-8L20-11 21-7 26-8 24-3 28-1 23 1.5 24 5 19 5 17 9C11 8 5 5 2 0Z" fill="url(#lg)" filter="url(#vb)"/><path d="M1 0Q12-2 29-5" fill="none" stroke="#b4b4ba" stroke-width="1" opacity=".85"/><path d="M10-1.5l7-9M14-2l9-7M13-2l6 8M18-3l7 5" fill="none" stroke="#3c3c40" stroke-width=".8" opacity=".8"/></g><g transform="translate(689.2 412.5) scale(-1 1) rotate(-12)"><path d="M0 0C3-6 9-9 15-10L18-15 21-10.5 26-14 26-8.5 31-9 28.5-4 32-1 28 1.5 30 5.5 25 5.5 25.5 10 20 8.5 18.5 13C11 12 4 8 0 0Z" fill="#2e2e32" stroke="#28282c" stroke-width="1.2" stroke-linejoin="round"/><path d="M2 0C6-5 11-7 16-8L20-11 21-7 26-8 24-3 28-1 23 1.5 24 5 19 5 17 9C11 8 5 5 2 0Z" fill="url(#lg)" filter="url(#vb)"/><path d="M1 0Q12-2 29-5" fill="none" stroke="#b4b4ba" stroke-width="1" opacity=".85"/><path d="M10-1.5l7-9M14-2l9-7M13-2l6 8M18-3l7 5" fill="none" stroke="#3c3c40" stroke-width=".8" opacity=".8"/></g><g transform="translate(677.8 458) scale(1 1) rotate(-12)"><path d="M0 0C3-6 9-9 15-10L18-15 21-10.5 26-14 26-8.5 31-9 28.5-4 32-1 28 1.5 30 5.5 25 5.5 25.5 10 20 8.5 18.5 13C11 12 4 8 0 0Z" fill="#2e2e32" stroke="#28282c" stroke-width="1.2" stroke-linejoin="round"/><path d="M2 0C6-5 11-7 16-8L20-11 21-7 26-8 24-3 28-1 23 1.5 24 5 19 5 17 9C11 8 5 5 2 0Z" fill="url(#lg)" filter="url(#vb)"/><path d="M1 0Q12-2 29-5" fill="none" stroke="#b4b4ba" stroke-width="1" opacity=".85"/><path d="M10-1.5l7-9M14-2l9-7M13-2l6 8M18-3l7 5" fill="none" stroke="#3c3c40" stroke-width=".8" opacity=".8"/></g><g transform="translate(689.2 503.5) scale(-1 1) rotate(-12)"><path d="M0 0C3-6 9-9 15-10L18-15 21-10.5 26-14 26-8.5 31-9 28.5-4 32-1 28 1.5 30 5.5 25 5.5 25.5 10 20 8.5 18.5 13C11 12 4 8 0 0Z" fill="#2e2e32" stroke="#28282c" stroke-width="1.2" stroke-linejoin="round"/><path d="M2 0C6-5 11-7 16-8L20-11 21-7 26-8 24-3 28-1 23 1.5 24 5 19 5 17 9C11 8 5 5 2 0Z" fill="url(#lg)" filter="url(#vb)"/><path d="M1 0Q12-2 29-5" fill="none" stroke="#b4b4ba" stroke-width="1" opacity=".85"/><path d="M10-1.5l7-9M14-2l9-7M13-2l6 8M18-3l7 5" fill="none" stroke="#3c3c40" stroke-width=".8" opacity=".8"/></g><g transform="translate(684 258) scale(0.74 0.74) rotate(-14)"><path d="M0 0C3-6 9-9 15-10L18-15 21-10.5 26-14 26-8.5 31-9 28.5-4 32-1 28 1.5 30 5.5 25 5.5 25.5 10 20 8.5 18.5 13C11 12 4 8 0 0Z" fill="#2e2e32" stroke="#28282c" stroke-width="1.2" stroke-linejoin="round"/><path d="M2 0C6-5 11-7 16-8L20-11 21-7 26-8 24-3 28-1 23 1.5 24 5 19 5 17 9C11 8 5 5 2 0Z" fill="url(#lg)" filter="url(#vb)"/><path d="M1 0Q12-2 29-5" fill="none" stroke="#b4b4ba" stroke-width="1" opacity=".85"/><path d="M10-1.5l7-9M14-2l9-7M13-2l6 8M18-3l7 5" fill="none" stroke="#3c3c40" stroke-width=".8" opacity=".8"/></g><g transform="translate(678 258) scale(-0.6 0.6) rotate(-10)"><path d="M0 0C3-6 9-9 15-10L18-15 21-10.5 26-14 26-8.5 31-9 28.5-4 32-1 28 1.5 30 5.5 25 5.5 25.5 10 20 8.5 18.5 13C11 12 4 8 0 0Z" fill="#2e2e32" stroke="#28282c" stroke-width="1.2" stroke-linejoin="round"/><path d="M2 0C6-5 11-7 16-8L20-11 21-7 26-8 24-3 28-1 23 1.5 24 5 19 5 17 9C11 8 5 5 2 0Z" fill="url(#lg)" filter="url(#vb)"/><path d="M1 0Q12-2 29-5" fill="none" stroke="#b4b4ba" stroke-width="1" opacity=".85"/><path d="M10-1.5l7-9M14-2l9-7M13-2l6 8M18-3l7 5" fill="none" stroke="#3c3c40" stroke-width=".8" opacity=".8"/></g><ellipse cx="680.5" cy="255.5" rx="2.8" ry="3.6" fill="#ffff80" stroke="#2a2a2e" stroke-width="2.4"/><ellipse cx="680.5" cy="255.5" rx="2.8" ry="3.6" fill="none" stroke="#88888e" stroke-width=".8"/><g transform="translate(681 531) scale(-0.7 0.7) rotate(-16)"><path d="M0 0C3-6 9-9 15-10L18-15 21-10.5 26-14 26-8.5 31-9 28.5-4 32-1 28 1.5 30 5.5 25 5.5 25.5 10 20 8.5 18.5 13C11 12 4 8 0 0Z" fill="#2e2e32" stroke="#28282c" stroke-width="1.2" stroke-linejoin="round"/><path d="M2 0C6-5 11-7 16-8L20-11 21-7 26-8 24-3 28-1 23 1.5 24 5 19 5 17 9C11 8 5 5 2 0Z" fill="url(#lg)" filter="url(#vb)"/><path d="M1 0Q12-2 29-5" fill="none" stroke="#b4b4ba" stroke-width="1" opacity=".85"/><path d="M10-1.5l7-9M14-2l9-7M13-2l6 8M18-3l7 5" fill="none" stroke="#3c3c40" stroke-width=".8" opacity=".8"/></g><g transform="translate(685 531.5) scale(0.85 0.85) rotate(8)"><path d="M0 0C3-6 9-9 15-10L18-15 21-10.5 26-14 26-8.5 31-9 28.5-4 32-1 28 1.5 30 5.5 25 5.5 25.5 10 20 8.5 18.5 13C11 12 4 8 0 0Z" fill="#2e2e32" stroke="#28282c" stroke-width="1.2" stroke-linejoin="round"/><path d="M2 0C6-5 11-7 16-8L20-11 21-7 26-8 24-3 28-1 23 1.5 24 5 19 5 17 9C11 8 5 5 2 0Z" fill="url(#lg)" filter="url(#vb)"/><path d="M1 0Q12-2 29-5" fill="none" stroke="#b4b4ba" stroke-width="1" opacity=".85"/><path d="M10-1.5l7-9M14-2l9-7M13-2l6 8M18-3l7 5" fill="none" stroke="#3c3c40" stroke-width=".8" opacity=".8"/></g></g></svg><div class="a" style="left:1093px;top:44px;width:1px;height:703px;background:#a0a0a0"></div><div class="a" style="left:1094px;top:44px;width:1px;height:703px;background:#fff"></div><div class="a" style="left:1357px;top:44px;width:9px;height:678px;background:#f3f3f3"></div><div class="rhdr" style="top:45px"><b>Vectors</b><span class="cbtn" style="left:225px;top:1px;background:#c9d3e2;border-left-color:#e8eef6;border-top-color:#e8eef6;border-right-color:#222;border-bottom-color:#222"><i></i></span></div><div class="a" style="left:1103px;top:61px;width:239px;height:23px;background:#fff;box-sizing:border-box;border:1px solid #808080;border-right-color:#e8e8e8;border-bottom-color:#e8e8e8;box-shadow:inset 1px 1px 0 #404040"></div><div class="t" style="left:1105px;top:65px;font-size:12px">Default Sheet</div><div class="a" style="left:1325px;top:63px;width:16px;height:19px;background:#f0f0f0;box-sizing:border-box;border:1px solid #fff;border-right-color:#555;border-bottom-color:#555;box-shadow:inset -1px -1px 0 #a0a0a0"></div><svg class="a" style="left:1329px;top:70px" width="8" height="5" viewBox="0 0 8 5"><path d="M0 0h8L4 4.5z" fill="#000"/></svg><div class="a" style="left:1102px;top:112px;width:243px;height:26px;background:#d9d9d9"></div><div class="a" style="left:1106px;top:116px;width:17px;height:18px;background:#e6e6e6;box-sizing:border-box;border:1px solid #fff;border-right-color:#9a9a9a;border-bottom-color:#9a9a9a"></div><div class="a" style="left:1108px;top:119px;width:13px;height:13px;border-radius:50%;background:#000"></div><div class="t" style="left:1128px;top:119.5px;font-size:12px">Default Layer</div><svg class="a" style="left:1312px;top:142px" width="12" height="12" viewBox="0 0 12 12"><rect width="12" height="12" rx="1.5" fill="#1d4c9c"/><rect x=".5" y=".5" width="11" height="11" rx="1.5" fill="none" stroke="#0e2f6c" stroke-width="1"/><path d="M6 2.2V9.5M2.6 5.6L6 2.2 9.4 5.6" fill="none" stroke="#fff" stroke-width="2"/></svg><svg class="a" style="left:1330px;top:142px" width="12" height="12" viewBox="0 0 12 12"><rect width="12" height="12" rx="1.5" fill="#1d4c9c"/><rect x=".5" y=".5" width="11" height="11" rx="1.5" fill="none" stroke="#0e2f6c" stroke-width="1"/><path d="M6 9.8V2.5M2.6 6.4L6 9.8 9.4 6.4" fill="none" stroke="#fff" stroke-width="2"/></svg><div class="rhdr" style="top:172px"><b>Bitmaps</b><span class="cbtn" style="left:225px;top:1px;background:#c9d3e2;border-left-color:#e8eef6;border-top-color:#e8eef6;border-right-color:#222;border-bottom-color:#222"><i></i></span></div><div class="a" style="left:1102px;top:213px;width:243px;height:24px;background:#d9d9d9"></div><div class="t" style="left:1128px;top:219.5px;font-size:12px">Bitmap Layer 1</div><div class="rhdr" style="top:253px"><b>Reliefs</b><span class="cbtn" style="left:225px;top:1px;background:#c9d3e2;border-left-color:#e8eef6;border-top-color:#e8eef6;border-right-color:#222;border-bottom-color:#222"><i></i></span></div><div class="a" style="left:1103px;top:269px;width:239px;height:23px;background:#fff;box-sizing:border-box;border:1px solid #808080;border-right-color:#e8e8e8;border-bottom-color:#e8e8e8;box-shadow:inset 1px 1px 0 #404040"></div><div class="t" style="left:1105px;top:273px;font-size:12px">Front Relief</div><div class="a" style="left:1325px;top:271px;width:16px;height:19px;background:#f0f0f0;box-sizing:border-box;border:1px solid #fff;border-right-color:#555;border-bottom-color:#555;box-shadow:inset -1px -1px 0 #a0a0a0"></div><svg class="a" style="left:1329px;top:278px" width="8" height="5" viewBox="0 0 8 5"><path d="M0 0h8L4 4.5z" fill="#000"/></svg><div class="a" style="left:1102px;top:321px;width:243px;height:25px;background:#d9d9d9"></div><svg class="a" style="left:1138px;top:329px" width="6" height="8" viewBox="0 0 6 8"><path d="M.5 0v8L5 4z" fill="#000"/></svg><div class="t" style="left:1149px;top:327.5px;font-size:12px">Relief Layer 1</div><svg class="a" style="left:1312px;top:349px" width="12" height="12" viewBox="0 0 12 12"><rect width="12" height="12" rx="1.5" fill="#1d4c9c"/><rect x=".5" y=".5" width="11" height="11" rx="1.5" fill="none" stroke="#0e2f6c" stroke-width="1"/><path d="M6 2.2V9.5M2.6 5.6L6 2.2 9.4 5.6" fill="none" stroke="#fff" stroke-width="2"/></svg><svg class="a" style="left:1330px;top:349px" width="12" height="12" viewBox="0 0 12 12"><rect width="12" height="12" rx="1.5" fill="#1d4c9c"/><rect x=".5" y=".5" width="11" height="11" rx="1.5" fill="none" stroke="#0e2f6c" stroke-width="1"/><path d="M6 9.8V2.5M2.6 6.4L6 9.8 9.4 6.4" fill="none" stroke="#fff" stroke-width="2"/></svg><svg class="a" style="left:0;top:0" width="1366" height="768" viewBox="0 0 1366 768"><defs><linearGradient id="gnew" x1="0" y1="0" x2="1" y2="0"><stop offset="0" stop-color="#c8d6ea"/><stop offset=".5" stop-color="#9fb4d2"/><stop offset="1" stop-color="#6f88ae"/></linearGradient><linearGradient id="ggrey" x1="0" y1="0" x2="1" y2="1"><stop offset="0" stop-color="#8a8a8a"/><stop offset="1" stop-color="#e8e8e8"/></linearGradient></defs><g transform="translate(1104 91)"><path d="M11 15l4-1-1-4z" fill="#b9b9b9"/><path d="M1 0h6l4 4v11H1z" fill="#8ea6c8"/><path d="M1 0h6l4 4v11H1z" fill="url(#gnew)"/><path d="M7 0l4 4H7z" fill="#e6eef8"/></g><g transform="translate(1139 91.5)"><path d="M2 13l12-1 2-4-3 0z" fill="#bdbdbd"/><path d="M1 2q0-1 1-1h4l1.5 1.5H12q1 0 1 1V7l2.5.2L13 12.5 1 13z" fill="#f3df2a"/><path d="M1 8l3-2 11.5 1.2L13 12.5 1 13z" fill="#ffef45"/><path d="M1 12l12-.5v1L1 13z" fill="#c9b300"/></g><g transform="translate(1176 91)"><path d="M3 15h13v-2H3z" fill="#c4c4c4"/><path d="M1 1h13v13H2.5L1 12.5z" fill="#2b62c0"/><rect x="3.5" y="1" width="8" height="5.5" fill="#e9eef7"/><rect x="4.5" y="9" width="6.5" height="5" fill="#1c3f86"/><rect x="5.5" y="10" width="2" height="3" fill="#dfe6f3"/></g><g transform="translate(1211 90)"><path d="M5 17l12-2-2-4z" fill="#b8b8b8" opacity=".7"/><path d="M2 1l8-1 5 15-9 2z" fill="#c9a877"/><path d="M2 1l8-1 1.2 3.6-8 1.2z" fill="#b08d5c"/><path d="M1.2 3l1.6-.3M1.8 5l1.6-.3M2.4 7l1.6-.3M3 9l1.6-.3M3.6 11l1.6-.3M4.2 13l1.6-.3" stroke="#7a6a50" stroke-width=".9"/></g><g transform="translate(1252 90.5)"><path d="M0 0h8l3 3v13H0z" fill="#9aa8c0"/><path d="M8 0l3 3H8z" fill="#f4f6fa"/><g transform="translate(1 2.5) scale(0.85)"><circle cx="5.5" cy="5.2" r="5" fill="#f7d21e"/><circle cx="4.2" cy="3.8" r="2.2" fill="#fff6a8"/><path d="M3 9h5l-.6 3.2H3.6z" fill="#f0b020"/><rect x="3.4" y="11.6" width="4.2" height="3" fill="#5a3a1a"/></g></g><g transform="translate(1289 91.5)"><ellipse cx="6" cy="3" rx="6" ry="2.6" fill="#7fb0ea"/><ellipse cx="6" cy="3" rx="4.2" ry="1.5" fill="#d6e6fa"/><path d="M.3 4l1.5 10q4.2 2 8.4 0L11.7 4q-5.7 2.6-11.4 0z" fill="#3f86dc"/><path d="M2.2 6l.8 7.5 1.6.6L3.8 6.4z" fill="#8fbdf2"/></g><g transform="translate(1322.5 89.5)"><rect x="0" y="0" width="18" height="18" fill="#f2f2f2" stroke="#fff" stroke-width="1"/><path d="M0 18.5h18.5V0" fill="none" stroke="#a8a8a8" stroke-width="1"/><g transform="translate(7.5 0.5) scale(0.92)"><circle cx="5.5" cy="5.2" r="5" fill="#f7d21e"/><circle cx="4.2" cy="3.8" r="2.2" fill="#fff6a8"/><path d="M3 9h5l-.6 3.2H3.6z" fill="#f0b020"/><rect x="3.4" y="11.6" width="4.2" height="3" fill="#5a3a1a"/></g><g transform="translate(1.5 3) scale(0.98)"><circle cx="5.5" cy="5.2" r="5" fill="#f7d21e"/><circle cx="4.2" cy="3.8" r="2.2" fill="#fff6a8"/><path d="M3 9h5l-.6 3.2H3.6z" fill="#f0b020"/><rect x="3.4" y="11.6" width="4.2" height="3" fill="#5a3a1a"/></g></g><g transform="translate(1287.5 116.5)"><rect x="0" y="0" width="17" height="17" fill="#ddd" stroke="#fff" stroke-width="1"/><path d="M0 17.5h17.5V0" fill="none" stroke="#8a8a8a" stroke-width="1"/><path d="M6 9V6.5q0-3 3-3t3 3" fill="none" stroke="#9a9a9a" stroke-width="1.6"/><rect x="5" y="8.5" width="8.5" height="7" fill="#a9a9a9"/><rect x="5" y="8.5" width="8.5" height="2" fill="#d0d0d0"/><path d="M9.2 11v3" stroke="#333" stroke-width="1.4"/></g><g transform="translate(1305.5 116.5)"><rect x="0" y="0" width="17" height="17" fill="#efefef" stroke="#fff" stroke-width="1"/><path d="M0 17.5h17.5V0" fill="none" stroke="#8a8a8a" stroke-width="1"/><path d="M1.5 1v15.5H16" fill="none" stroke="#333" stroke-width="1" stroke-dasharray="2 1.5"/><path d="M14.5 2.5l-3.5.5-5.5 6.5 2.5 2.5 6-6z" fill="#111"/><path d="M6 9l-2.5 5 5-2.5z" fill="#111"/></g><g transform="translate(1323.5 116.5)"><rect x="0" y="0" width="17" height="17" fill="#eee" stroke="#fff" stroke-width="1"/><path d="M0 17.5h17.5V0" fill="none" stroke="#a8a8a8" stroke-width="1"/><g transform="translate(3.2 1.2) scale(0.98)"><circle cx="5.5" cy="5.2" r="5" fill="#f7d21e"/><circle cx="4.2" cy="3.8" r="2.2" fill="#fff6a8"/><path d="M3 9h5l-.6 3.2H3.6z" fill="#f0b020"/><rect x="3.4" y="11.6" width="4.2" height="3" fill="#5a3a1a"/></g></g><g transform="translate(1104 192)"><path d="M11 15l4-1-1-4z" fill="#b9b9b9"/><path d="M1 0h6l4 4v11H1z" fill="#8ea6c8"/><path d="M1 0h6l4 4v11H1z" fill="url(#gnew)"/><path d="M7 0l4 4H7z" fill="#e6eef8"/></g><g transform="translate(1135 192.5)"><path d="M2 13l12-1 2-4-3 0z" fill="#bdbdbd"/><path d="M1 2q0-1 1-1h4l1.5 1.5H12q1 0 1 1V7l2.5.2L13 12.5 1 13z" fill="#f3df2a"/><path d="M1 8l3-2 11.5 1.2L13 12.5 1 13z" fill="#ffef45"/><path d="M1 12l12-.5v1L1 13z" fill="#c9b300"/></g><g transform="translate(1165 192)"><path d="M3 15h13v-2H3z" fill="#c4c4c4"/><path d="M1 1h13v13H2.5L1 12.5z" fill="#2b62c0"/><rect x="3.5" y="1" width="8" height="5.5" fill="#e9eef7"/><rect x="4.5" y="9" width="6.5" height="5" fill="#1c3f86"/><rect x="5.5" y="10" width="2" height="3" fill="#dfe6f3"/></g><g transform="translate(1197 191)"><path d="M5 17l12-2-2-4z" fill="#b8b8b8" opacity=".7"/><path d="M2 1l8-1 5 15-9 2z" fill="#c9a877"/><path d="M2 1l8-1 1.2 3.6-8 1.2z" fill="#b08d5c"/><path d="M1.2 3l1.6-.3M1.8 5l1.6-.3M2.4 7l1.6-.3M3 9l1.6-.3M3.6 11l1.6-.3M4.2 13l1.6-.3" stroke="#7a6a50" stroke-width=".9"/></g><g transform="translate(1230 193)"><path d="M3 15h12l-1-4z" fill="#bdbdbd"/><rect x="0" y="0" width="13" height="13" fill="url(#ggrey)"/><path d="M13 10l3 1.5-3 3z" fill="#777"/></g><g transform="translate(1260 192.5)"><path d="M6 8h10l2 8H4z" fill="#7a80d0"/><g transform="translate(0 0) scale(0.72)"><rect width="16" height="16" fill="#6b6a2c"/><rect width="16" height="7" fill="#a89c3c"/><path d="M2 16q0-7 6-7t6 7z" fill="#2a1c10"/><path d="M4.2 7q0-5.5 3.8-5.5T11.8 7l.8 4H3.4z" fill="#23170d"/><ellipse cx="8" cy="6.2" rx="2.3" ry="3" fill="#e0b070"/><path d="M5.5 16q0-3.5 2.5-3.5t2.5 3.5z" fill="#d8a868"/></g></g><g transform="translate(1294 192.5)"><ellipse cx="6" cy="3" rx="6" ry="2.6" fill="#7fb0ea"/><ellipse cx="6" cy="3" rx="4.2" ry="1.5" fill="#d6e6fa"/><path d="M.3 4l1.5 10q4.2 2 8.4 0L11.7 4q-5.7 2.6-11.4 0z" fill="#3f86dc"/><path d="M2.2 6l.8 7.5 1.6.6L3.8 6.4z" fill="#8fbdf2"/></g><g transform="translate(1322.5 190.5)"><rect x="0" y="0" width="18" height="18" fill="#f2f2f2" stroke="#fff" stroke-width="1"/><path d="M0 18.5h18.5V0" fill="none" stroke="#a8a8a8" stroke-width="1"/><g transform="translate(7.5 0.5) scale(0.92)"><circle cx="5.5" cy="5.2" r="5" fill="#f7d21e"/><circle cx="4.2" cy="3.8" r="2.2" fill="#fff6a8"/><path d="M3 9h5l-.6 3.2H3.6z" fill="#f0b020"/><rect x="3.4" y="11.6" width="4.2" height="3" fill="#5a3a1a"/></g><g transform="translate(1.5 3) scale(0.98)"><circle cx="5.5" cy="5.2" r="5" fill="#f7d21e"/><circle cx="4.2" cy="3.8" r="2.2" fill="#fff6a8"/><path d="M3 9h5l-.6 3.2H3.6z" fill="#f0b020"/><rect x="3.4" y="11.6" width="4.2" height="3" fill="#5a3a1a"/></g></g><g transform="translate(1105.5 217) scale(1.03)"><rect width="16" height="16" fill="#6b6a2c"/><rect width="16" height="7" fill="#a89c3c"/><path d="M2 16q0-7 6-7t6 7z" fill="#2a1c10"/><path d="M4.2 7q0-5.5 3.8-5.5T11.8 7l.8 4H3.4z" fill="#23170d"/><ellipse cx="8" cy="6.2" rx="2.3" ry="3" fill="#e0b070"/><path d="M5.5 16q0-3.5 2.5-3.5t2.5 3.5z" fill="#d8a868"/></g><g transform="translate(1104 299)"><path d="M11 15l4-1-1-4z" fill="#b9b9b9"/><path d="M1 0h6l4 4v11H1z" fill="#8ea6c8"/><path d="M1 0h6l4 4v11H1z" fill="url(#gnew)"/><path d="M7 0l4 4H7z" fill="#e6eef8"/></g><g transform="translate(1130 299.5)"><path d="M2 13l12-1 2-4-3 0z" fill="#bdbdbd"/><path d="M1 2q0-1 1-1h4l1.5 1.5H12q1 0 1 1V7l2.5.2L13 12.5 1 13z" fill="#f3df2a"/><path d="M1 8l3-2 11.5 1.2L13 12.5 1 13z" fill="#ffef45"/><path d="M1 12l12-.5v1L1 13z" fill="#c9b300"/></g><g transform="translate(1157 299)"><path d="M3 15h13v-2H3z" fill="#c4c4c4"/><path d="M1 1h13v13H2.5L1 12.5z" fill="#2b62c0"/><rect x="3.5" y="1" width="8" height="5.5" fill="#e9eef7"/><rect x="4.5" y="9" width="6.5" height="5" fill="#1c3f86"/><rect x="5.5" y="10" width="2" height="3" fill="#dfe6f3"/></g><g transform="translate(1185 298)"><path d="M5 17l12-2-2-4z" fill="#b8b8b8" opacity=".7"/><path d="M2 1l8-1 5 15-9 2z" fill="#c9a877"/><path d="M2 1l8-1 1.2 3.6-8 1.2z" fill="#b08d5c"/><path d="M1.2 3l1.6-.3M1.8 5l1.6-.3M2.4 7l1.6-.3M3 9l1.6-.3M3.6 11l1.6-.3M4.2 13l1.6-.3" stroke="#7a6a50" stroke-width=".9"/></g><g transform="translate(1213 298)"><path d="M0 12l8-4 8 4-8 5z" fill="#b01818"/><path d="M5 12l3-1.5 3 1.5-3 2z" fill="#ffe84a"/><path d="M0 5l8-4.5L16 5 8 10z" fill="#7d86dc"/><path d="M0 5l8 5v1.2L0 6.2z" fill="#4a55b0"/></g><g transform="translate(1243 298.5)"><path d="M0 0h8l3 3v13H0z" fill="#9aa8c0"/><path d="M8 0l3 3H8z" fill="#f4f6fa"/><g transform="translate(1 2.5) scale(0.85)"><circle cx="5.5" cy="5.2" r="5" fill="#f7d21e"/><circle cx="4.2" cy="3.8" r="2.2" fill="#fff6a8"/><path d="M3 9h5l-.6 3.2H3.6z" fill="#f0b020"/><rect x="3.4" y="11.6" width="4.2" height="3" fill="#5a3a1a"/></g></g><g transform="translate(1268.5 299)"><rect width="16" height="16" fill="#0a0a0a"/><circle cx="4.5" cy="3.2" r="1.6" fill="#aaa"/><circle cx="11.5" cy="3.2" r="1.6" fill="#aaa"/><circle cx="8" cy="5" r="3" fill="#bdbdbd"/><ellipse cx="8" cy="11" rx="4.2" ry="4" fill="#a8a8a8"/><ellipse cx="8" cy="11.5" rx="2.3" ry="2.4" fill="#d8d8d8"/><circle cx="3" cy="9" r="1.5" fill="#999"/><circle cx="13" cy="9" r="1.5" fill="#999"/></g><g transform="translate(1297 299.5)"><ellipse cx="6" cy="3" rx="6" ry="2.6" fill="#7fb0ea"/><ellipse cx="6" cy="3" rx="4.2" ry="1.5" fill="#d6e6fa"/><path d="M.3 4l1.5 10q4.2 2 8.4 0L11.7 4q-5.7 2.6-11.4 0z" fill="#3f86dc"/><path d="M2.2 6l.8 7.5 1.6.6L3.8 6.4z" fill="#8fbdf2"/></g><g transform="translate(1322.5 297.5)"><rect x="0" y="0" width="18" height="18" fill="#f2f2f2" stroke="#fff" stroke-width="1"/><path d="M0 18.5h18.5V0" fill="none" stroke="#a8a8a8" stroke-width="1"/><g transform="translate(7.5 0.5) scale(0.92)"><circle cx="5.5" cy="5.2" r="5" fill="#f7d21e"/><circle cx="4.2" cy="3.8" r="2.2" fill="#fff6a8"/><path d="M3 9h5l-.6 3.2H3.6z" fill="#f0b020"/><rect x="3.4" y="11.6" width="4.2" height="3" fill="#5a3a1a"/></g><g transform="translate(1.5 3) scale(0.98)"><circle cx="5.5" cy="5.2" r="5" fill="#f7d21e"/><circle cx="4.2" cy="3.8" r="2.2" fill="#fff6a8"/><path d="M3 9h5l-.6 3.2H3.6z" fill="#f0b020"/><rect x="3.4" y="11.6" width="4.2" height="3" fill="#5a3a1a"/></g></g><g transform="translate(1111 322.5)"><path d="M2 12Q3 1 12 2q7 1 8 8l-4 2Q14 6 9 7 5 8 5 14z" fill="#c9b26a"/><path d="M2 12Q3 1 12 2q7 1 8 8" fill="none" stroke="#8a7636" stroke-width="1"/><path d="M5 14Q5 8 9 7q5-1 7 5z" fill="#7d78c8"/><path d="M1 17.5h7M4.5 14v7" stroke="#000" stroke-width="1.2"/></g><g transform="translate(1323.5 324.5)"><rect x="0" y="0" width="17" height="17" fill="#eee" stroke="#fff" stroke-width="1"/><path d="M0 17.5h17.5V0" fill="none" stroke="#a8a8a8" stroke-width="1"/><g transform="translate(3.2 1.2) scale(0.98)"><circle cx="5.5" cy="5.2" r="5" fill="#f7d21e"/><circle cx="4.2" cy="3.8" r="2.2" fill="#fff6a8"/><path d="M3 9h5l-.6 3.2H3.6z" fill="#f0b020"/><rect x="3.4" y="11.6" width="4.2" height="3" fill="#5a3a1a"/></g></g></svg><svg class="a" style="left:1094px;top:721px" width="272" height="27" viewBox="0 0 272 27"><rect x="0" y="1" width="272" height="25" fill="#c9c9c9"/><rect x="0" y="1" width="272" height="25" filter="url(#nz)"/><path d="M0 1H50V21q0 4 -4 4H0z" fill="#f0f0f0"/><path d="M50 1V21q0 4 -4 4H0" fill="none" stroke="#a8a8a8" stroke-width="1"/><path d="M50.5 1.5H95q4 0 4 4V21q0 4 -4 4H50.5" fill="#f0f0f0" stroke="#a8a8a8" stroke-width="1"/><path d="M99 1.5H272M0 26.5H272" stroke="#a6a6a6" stroke-width="1"/></svg><div class="t" style="left:1103.5px;top:727px;font-size:12px;letter-spacing:-0.4px">Layers</div><div class="t" style="left:1151px;top:728px;font-size:12px">Add In</div><div class="a" style="left:277px;top:706px;width:811px;height:1px;background:#a0a0a0"></div><div class="a" style="left:277px;top:707px;width:811px;height:1px;background:#fff"></div><div class="a" style="left:277px;top:706px;width:1px;height:41px;background:#a0a0a0"></div><div class="a" style="left:278px;top:707px;width:1px;height:40px;background:#fff"></div><div class="a" style="left:0;top:747px;width:1366px;height:1px;background:#fbfbfb"></div><div class="a" style="left:298px;top:723px;width:25px;height:20px;background:#000"></div><div class="a" style="left:283px;top:711px;width:25px;height:20px;background:#fff;border:1px solid #222;box-sizing:border-box;box-shadow:1px 1px 0 #888"></div><svg class="a" style="left:311px;top:711px" width="13" height="11" viewBox="0 0 13 11"><rect x=".7" y=".7" width="7" height="5" rx="2.4" fill="none" stroke="#111" stroke-width="1.2"/><rect x="4.3" y="4.3" width="7.5" height="5.5" rx="2.6" fill="none" stroke="#111" stroke-width="1.2"/></svg><div class="a" style="left:333px;top:712px;width:30px;height:30px;background:#ffffff;box-sizing:border-box;border:1px solid #111;box-shadow:1px 1px 0 #777"></div><div class="a" style="left:368px;top:712px;width:30px;height:30px;background:#000000;box-sizing:border-box;border:1px solid #000;box-shadow:1px 1px 0 #777"></div><div class="a" style="left:403px;top:712px;width:30px;height:30px;background:#00ffff;box-sizing:border-box;border:1px solid #111;box-shadow:1px 1px 0 #777"></div><div class="a" style="left:438px;top:712px;width:30px;height:30px;background:#3040e0;box-sizing:border-box;border:1px solid #111;box-shadow:1px 1px 0 #777"></div><div class="a" style="left:473px;top:712px;width:30px;height:30px;background:#5cba50;box-sizing:border-box;border:1px solid #111;box-shadow:1px 1px 0 #777"></div><div class="a" style="left:508px;top:712px;width:30px;height:30px;background:#e01020;box-sizing:border-box;border:1px solid #111;box-shadow:1px 1px 0 #777"></div><div class="a" style="left:543px;top:712px;width:30px;height:30px;background:#a030e0;box-sizing:border-box;border:1px solid #111;box-shadow:1px 1px 0 #777"></div><div class="a" style="left:578px;top:712px;width:30px;height:30px;background:#ffff80;box-sizing:border-box;border:1px solid #111;box-shadow:1px 1px 0 #777"></div><div class="a" style="left:613px;top:712px;width:30px;height:30px;background:#a89830;box-sizing:border-box;border:1px solid #111;box-shadow:1px 1px 0 #777"></div><div class="a" style="left:648px;top:712px;width:30px;height:30px;background:#ffc81e;box-sizing:border-box;border:1px solid #111;box-shadow:1px 1px 0 #777"></div><div class="a" style="left:683px;top:712px;width:30px;height:30px;background:#0a0a0a;box-sizing:border-box;border:1px solid #000;box-shadow:1px 1px 0 #777"></div><div class="a" style="left:718px;top:712px;width:30px;height:30px;background:#0a0a0a;box-sizing:border-box;border:1px solid #000;box-shadow:1px 1px 0 #777"></div><div class="a" style="left:753px;top:712px;width:30px;height:30px;background:#0a0a0a;box-sizing:border-box;border:1px solid #000;box-shadow:1px 1px 0 #777"></div><div class="a" style="left:788px;top:712px;width:30px;height:30px;background:#0a0a0a;box-sizing:border-box;border:1px solid #000;box-shadow:1px 1px 0 #777"></div><div class="a" style="left:823px;top:712px;width:30px;height:30px;background:#0a0a0a;box-sizing:border-box;border:1px solid #000;box-shadow:1px 1px 0 #777"></div><div class="a" style="left:858px;top:712px;width:30px;height:30px;background:#0a0a0a;box-sizing:border-box;border:1px solid #000;box-shadow:1px 1px 0 #777"></div><div class="a" style="left:893px;top:712px;width:30px;height:30px;background:#0a0a0a;box-sizing:border-box;border:1px solid #000;box-shadow:1px 1px 0 #777"></div><div class="a" style="left:928px;top:712px;width:30px;height:30px;background:#0a0a0a;box-sizing:border-box;border:1px solid #000;box-shadow:1px 1px 0 #777"></div><div class="a" style="left:963px;top:712px;width:30px;height:30px;background:#0a0a0a;box-sizing:border-box;border:1px solid #000;box-shadow:1px 1px 0 #777"></div><div class="a" style="left:998px;top:712px;width:30px;height:30px;background:#0a0a0a;box-sizing:border-box;border:1px solid #000;box-shadow:1px 1px 0 #777"></div><div class="a" style="left:1033px;top:712px;width:30px;height:30px;background:#0a0a0a;box-sizing:border-box;border:1px solid #000;box-shadow:1px 1px 0 #777"></div><div class="a" style="left:1071px;top:708px;width:17px;height:39px;background:#f2f2f2"></div><svg class="a" style="left:1075px;top:712px" width="9" height="8" viewBox="0 0 9 8"><path d="M1 6L4.5 2.5 8 6" fill="none" stroke="#505050" stroke-width="2"/></svg><svg class="a" style="left:1075px;top:734px" width="9" height="8" viewBox="0 0 9 8"><path d="M1 2L4.5 5.5 8 2" fill="none" stroke="#505050" stroke-width="2"/></svg><div class="a" style="left:1023px;top:751px;width:66px;height:17px;box-sizing:border-box;border-left:1px solid #a0a0a0;border-top:1px solid #a0a0a0;border-right:1px solid #fff"></div><div class="a" style="left:1092px;top:751px;width:66px;height:17px;box-sizing:border-box;border-left:1px solid #a0a0a0;border-top:1px solid #a0a0a0;border-right:1px solid #fff"></div><div class="a" style="left:1161px;top:751px;width:60px;height:17px;box-sizing:border-box;border-left:1px solid #a0a0a0;border-top:1px solid #a0a0a0;border-right:1px solid #fff"></div><div class="a" style="left:1224px;top:751px;width:70px;height:17px;box-sizing:border-box;border-left:1px solid #a0a0a0;border-top:1px solid #a0a0a0;border-right:1px solid #fff"></div><div class="a" style="left:1297px;top:751px;width:69px;height:17px;box-sizing:border-box;border-left:1px solid #a0a0a0;border-top:1px solid #a0a0a0;border-right:1px solid #fff"></div><div class="t" style="left:1026px;top:754px;font-size:11.5px;letter-spacing:-0.3px">X: -391.102</div><div class="t" style="left:1095px;top:754px;font-size:11.5px;letter-spacing:-0.3px">Y: 842.363</div>
</body></html>
